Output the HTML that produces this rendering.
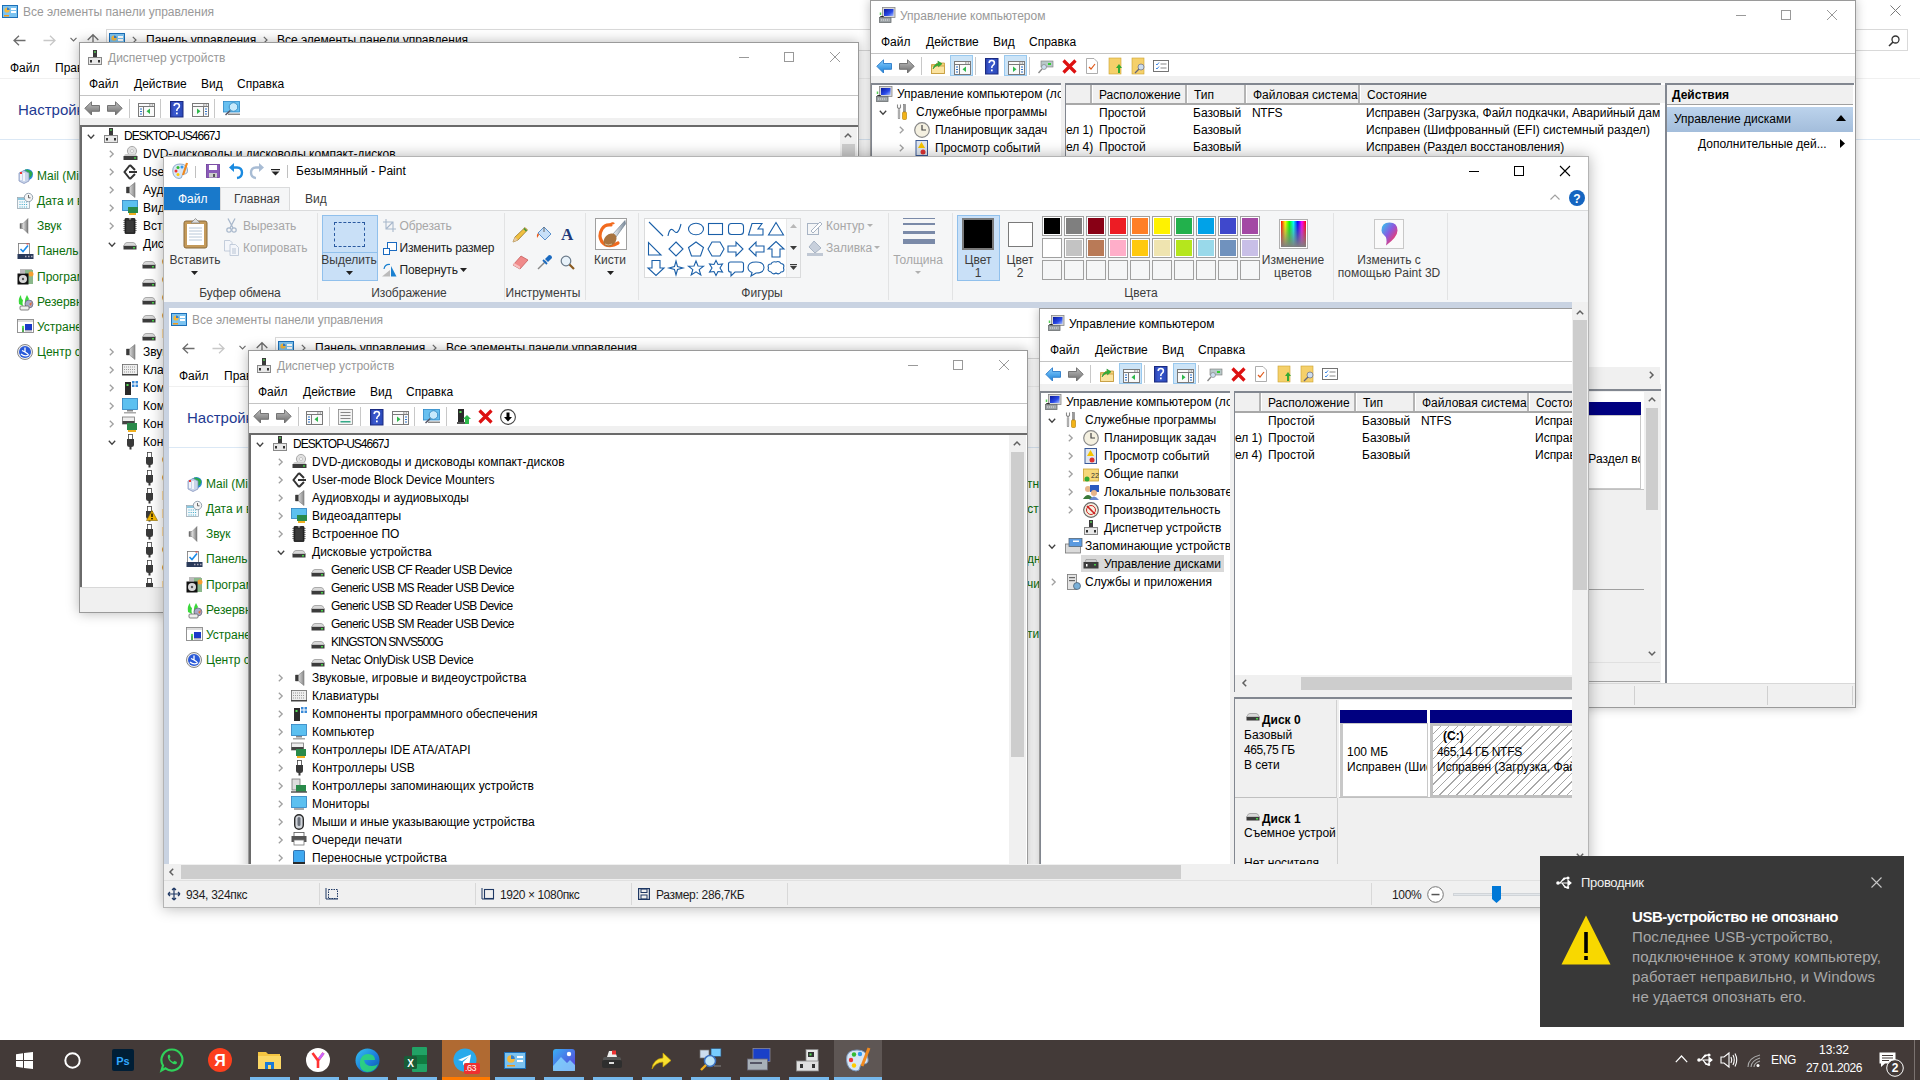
<!DOCTYPE html><html><head><meta charset="utf-8"><style>
*{margin:0;padding:0;box-sizing:border-box}
html,body{width:1920px;height:1080px;overflow:hidden;background:#fff}
body{position:relative;font-family:"Liberation Sans", sans-serif;font-size:12px;color:#000}
.a{position:absolute}
.t{position:absolute;white-space:nowrap;line-height:16px}
svg{overflow:visible}
</style></head><body>
<div class="a" style="left:0px;top:0px;width:1920px;height:1040px;background:#fff;"></div>
<svg class="a" style="left:2px;top:5px;" width="16" height="13" viewBox="0 0 16 13"><rect x="0.5" y="0.5" width="15" height="12" fill="#7cc3f0" stroke="#1c6fb8"/><circle cx="5" cy="5" r="2.6" fill="#f5b73b"/><path d="M5 5 L5 2.4 A2.6 2.6 0 0 1 7.6 5Z" fill="#2f7fd0"/><rect x="9" y="3" width="5" height="2" fill="#fff"/><rect x="9" y="6" width="5" height="2" fill="#fff"/><rect x="2" y="10" width="5" height="1.5" fill="#f09a1a"/></svg>
<div class="t" style="left:23px;top:4.0px;color:#999;">Все элементы панели управления</div>
<svg class="a" style="left:13px;top:35px;" width="13" height="11" viewBox="0 0 13 11"><path d="M6 0.7 L1 5.5 L6 10.3 M1 5.5 H12.5" fill="none" stroke="#6d6d6d" stroke-width="1.3"/></svg>
<svg class="a" style="left:43px;top:35px;" width="13" height="11" viewBox="0 0 13 11"><path d="M7 0.7 L12 5.5 L7 10.3 M12 5.5 H0.5" fill="none" stroke="#c8c8c8" stroke-width="1.3"/></svg>
<svg class="a" style="left:70px;top:37px;" width="7" height="5" viewBox="0 0 7 5"><path d="M0.5 0.8 L3.5 3.8 L6.5 0.8" fill="none" stroke="#6d6d6d" stroke-width="1.2"/></svg>
<svg class="a" style="left:87px;top:34px;" width="12" height="12" viewBox="0 0 12 12"><path d="M0.7 6 L6 0.7 L11.3 6 M6 0.7 V12" fill="none" stroke="#6d6d6d" stroke-width="1.3"/></svg>
<div class="a" style="left:106px;top:29px;width:1743px;height:22px;background:#fff;border:1px solid #d9d9d9;"></div>
<svg class="a" style="left:109px;top:33px;" width="16" height="13" viewBox="0 0 16 13"><rect x="0.5" y="0.5" width="15" height="12" fill="#7cc3f0" stroke="#1c6fb8"/><circle cx="5" cy="5" r="2.6" fill="#f5b73b"/><path d="M5 5 L5 2.4 A2.6 2.6 0 0 1 7.6 5Z" fill="#2f7fd0"/><rect x="9" y="3" width="5" height="2" fill="#fff"/><rect x="9" y="6" width="5" height="2" fill="#fff"/><rect x="2" y="10" width="5" height="1.5" fill="#f09a1a"/></svg>
<svg class="a" style="left:132px;top:36px;" width="5" height="8" viewBox="0 0 5 8"><path d="M0.8 0.8 L4 4 L0.8 7.2" fill="none" stroke="#6d6d6d" stroke-width="1.2"/></svg>
<div class="t" style="left:146px;top:32.0px;">Панель управления</div>
<svg class="a" style="left:263px;top:36px;" width="5" height="8" viewBox="0 0 5 8"><path d="M0.8 0.8 L4 4 L0.8 7.2" fill="none" stroke="#6d6d6d" stroke-width="1.2"/></svg>
<div class="t" style="left:277px;top:32.0px;">Все элементы панели управления</div>
<div class="a" style="left:1855px;top:29px;width:53px;height:22px;background:#fff;border:1px solid #d9d9d9;"></div>
<svg class="a" style="left:1888px;top:35px;" width="12" height="12" viewBox="0 0 12 12"><circle cx="7.5" cy="4.5" r="3.5" fill="none" stroke="#333" stroke-width="1.3"/><path d="M5 7 L1 11" stroke="#333" stroke-width="1.6"/></svg>
<svg class="a" style="left:1890px;top:5px;" width="11" height="11" viewBox="0 0 11 11"><path d="M0.5 0.5 L10.5 10.5 M10.5 0.5 L0.5 10.5" stroke="#7a7a7a" stroke-width="1"/></svg>
<div class="t" style="left:10px;top:60.0px;">Файл</div>
<div class="t" style="left:55px;top:60.0px;">Правка</div>
<div class="t" style="left:110px;top:60.0px;">Вид</div>
<div class="t" style="left:150px;top:60.0px;">Сервис</div>
<div class="a" style="left:0px;top:78px;width:1920px;height:1px;background:#f0f0f0;"></div>
<div class="t" style="left:18px;top:100.0px;font-size:15px;line-height:20px;color:#1e3a92;">Настройка параметров компьютера</div>
<div class="a" style="left:0px;top:139px;width:1920px;height:1px;background:#dbe8f5;"></div>
<svg class="a" style="left:17px;top:168px;" width="17" height="16" viewBox="0 0 17 16"><circle cx="10.5" cy="6.5" r="5.5" fill="#2a8ad8"/><path d="M8 1.5 Q13 1 15.5 5 Q15 9 12 10Z" fill="#2aa84a"/><path d="M2 5 L7 2.5 L12 5 V13 L7 15.5 L2 13Z" fill="#c8d4ea" stroke="#7a8ab8" stroke-width="0.7"/><path d="M4 6 V12 M7 5 V13" stroke="#fff" stroke-width="1.5"/><rect x="3" y="4" width="2" height="2" fill="#e33"/></svg>
<div class="t" style="left:37px;top:168.0px;color:#0b700b;">Mail (Microsoft Outlook)</div>
<svg class="a" style="left:17px;top:193px;" width="17" height="16" viewBox="0 0 17 16"><rect x="0.5" y="4.5" width="12" height="11" fill="#f4f8fb" stroke="#9aa8b4" stroke-width="0.8"/><rect x="1" y="5" width="11" height="2" fill="#8ac8e0"/><path d="M2.5 9 H11 M2.5 11.5 H11 M2.5 14 H11" stroke="#3aa8c8" stroke-width="1" stroke-dasharray="1 1.2"/><circle cx="11.5" cy="4.5" r="4.2" fill="#f4f4f4" stroke="#8a9aa8" stroke-width="0.9"/><path d="M11.5 2 V4.8 H13.5" fill="none" stroke="#444" stroke-width="0.8"/></svg>
<div class="t" style="left:37px;top:193.0px;color:#0b700b;">Дата и время</div>
<svg class="a" style="left:17px;top:218px;" width="17" height="16" viewBox="0 0 17 16"><defs><linearGradient id="cpsp" x1="0" x2="1"><stop offset="0" stop-color="#555"/><stop offset="0.4" stop-color="#ddd"/><stop offset="1" stop-color="#777"/></linearGradient></defs><path d="M3 5.5 H6 L11 0.5 V15.5 L6 10.5 H3Z" fill="url(#cpsp)" stroke="#777" stroke-width="0.5"/></svg>
<div class="t" style="left:37px;top:218.0px;color:#0b700b;">Звук</div>
<svg class="a" style="left:17px;top:243px;" width="17" height="16" viewBox="0 0 17 16"><rect x="1.5" y="0.5" width="11" height="11" fill="#fff" stroke="#777" stroke-width="0.8"/><path d="M3.5 6 L6 8.5 L11 2.5" fill="none" stroke="#1a8ae8" stroke-width="1.6"/><rect x="9.5" y="0.5" width="2" height="1" fill="#e33"/><rect x="0.5" y="11" width="16" height="5" fill="#2a3a5a"/><path d="M8 13.5 H9.5 M11 13.5 H12.5 M14 13.5 H15.5" stroke="#aab" stroke-width="1.4"/></svg>
<div class="t" style="left:37px;top:243.0px;color:#0b700b;">Панель управления NVIDIA</div>
<svg class="a" style="left:17px;top:269px;" width="17" height="16" viewBox="0 0 17 16"><rect x="3" y="0" width="12" height="4" fill="#bbb"/><rect x="8" y="1" width="8" height="14" fill="#8ab88a"/><circle cx="14" cy="5" r="2.5" fill="#f5a030"/><rect x="0.5" y="4.5" width="11" height="11" fill="#111"/><circle cx="6" cy="10" r="4" fill="#d8d8d8"/><circle cx="6" cy="10" r="1.2" fill="#555"/></svg>
<div class="t" style="left:37px;top:269.0px;color:#0b700b;">Программы и компоненты</div>
<svg class="a" style="left:17px;top:294px;" width="17" height="16" viewBox="0 0 17 16"><path d="M2 10 Q1 4 4 1 Q4 5 6 6 Q5 9 6 12Z" fill="#3ad83a"/><path d="M8 12 Q7 6 10 1 L12 5 Q10 7 11 11Z" fill="#3ad83a"/><circle cx="12" cy="10" r="4" fill="#a8a8c8" stroke="#556" stroke-width="0.6"/><path d="M12 10 L15 8 L14 12Z" fill="#e07040"/><rect x="3" y="12" width="9" height="4" rx="1" fill="#eee" stroke="#666" stroke-width="0.8"/></svg>
<div class="t" style="left:37px;top:294.0px;color:#0b700b;">Резервное копирование и восстановление</div>
<svg class="a" style="left:17px;top:319px;" width="17" height="16" viewBox="0 0 17 16"><rect x="0.5" y="0.5" width="16" height="13" fill="#fff" stroke="#888" stroke-width="0.9"/><rect x="1" y="1" width="15" height="2" fill="#ddd"/><rect x="8" y="5" width="7" height="6" fill="#1a3ac8"/><rect x="8" y="11" width="7" height="1.5" fill="#aab"/><rect x="5" y="8" width="2" height="5" fill="#5a5"/><circle cx="6" cy="8" r="1.2" fill="#5d5"/></svg>
<div class="t" style="left:37px;top:319.0px;color:#0b700b;">Устранение неполадок</div>
<svg class="a" style="left:17px;top:344px;" width="17" height="16" viewBox="0 0 17 16"><circle cx="8" cy="8" r="7.5" fill="#eee" stroke="#888" stroke-width="1"/><circle cx="8" cy="8" r="6" fill="#2a5ad8"/><path d="M8 3.5 V8 L5 6.5 M8 8 L11 10 M4 10 Q8 13.5 12 10.5" fill="none" stroke="#fff" stroke-width="1.3"/></svg>
<div class="t" style="left:37px;top:344.0px;color:#0b700b;">Центр синхронизации</div>
<div class="t" style="left:851.5px;top:168.0px;color:#0b700b;">отн</div>
<div class="t" style="left:851.5px;top:193.0px;color:#0b700b;">ост</div>
<div class="t" style="left:851.5px;top:243.0px;color:#0b700b;">одн</div>
<div class="t" style="left:851.5px;top:268.0px;color:#0b700b;">ачи</div>
<div class="t" style="left:851.5px;top:318.0px;color:#0b700b;">оти</div>
<div class="a" style="left:870px;top:0px;width:986px;height:708px;background:#fff;border:1px solid #9a9a9a;box-shadow:0 0 10px rgba(0,0,0,0.25);"></div>
<svg class="a" style="left:879px;top:7px;" width="17" height="16" viewBox="0 0 17 16"><defs><linearGradient id="cmg" x1="0" y1="0" x2="1" y2="1"><stop offset="0" stop-color="#0a1a9a"/><stop offset="0.6" stop-color="#2a4ae8"/><stop offset="1" stop-color="#a8c0ff"/></linearGradient></defs><rect x="3.5" y="0.5" width="12.5" height="10" fill="#d8d8d8" stroke="#888" stroke-width="0.8"/><rect x="5" y="2" width="9.5" height="7" fill="url(#cmg)"/><path d="M1.5 8 V5.5" stroke="#5c5" stroke-width="1.5"/><path d="M1 10 Q3 8.5 5 10" fill="none" stroke="#222" stroke-width="1"/><rect x="0.5" y="10.5" width="11.5" height="5" fill="#9aa0a4" stroke="#6a6e70" stroke-width="0.8"/><path d="M2 13 H10.5" stroke="#e8e8e8" stroke-width="1" stroke-dasharray="1.2 0.8"/></svg>
<div class="t" style="left:900px;top:8.0px;color:#999;">Управление компьютером</div>
<div class="a" style="left:1736px;top:15px;width:10px;height:1px;background:#999;"></div>
<div class="a" style="left:1781px;top:10px;width:10px;height:10px;border:1px solid #999;"></div>
<svg class="a" style="left:1827px;top:10px;" width="10" height="10" viewBox="0 0 10 10"><path d="M0 0 L10 10 M10 0 L0 10" stroke="#999" stroke-width="1"/></svg>
<div class="t" style="left:881px;top:34.0px;">Файл</div>
<div class="t" style="left:926px;top:34.0px;">Действие</div>
<div class="t" style="left:993px;top:34.0px;">Вид</div>
<div class="t" style="left:1029px;top:34.0px;">Справка</div>
<div class="a" style="left:871px;top:53px;width:984px;height:1px;background:#c4c4c4;"></div>
<svg class="a" style="left:876px;top:59px;" width="16" height="15" viewBox="0 0 16 15"><defs><linearGradient id="abg" x1="0" y1="0" x2="0" y2="1"><stop offset="0" stop-color="#8ad0ff"/><stop offset="1" stop-color="#1a80d8"/></linearGradient></defs><path d="M0.8 7.3 L7.5 0.8 V4.5 H15.5 V10.3 H7.5 V14 Z" fill="url(#abg)" stroke="#2a7ac8" stroke-width="0.9" stroke-linejoin="round"/></svg>
<svg class="a" style="left:899px;top:59px;" width="16" height="15" viewBox="0 0 16 15"><defs><linearGradient id="afg" x1="0" y1="0" x2="0" y2="1"><stop offset="0" stop-color="#c0c0c0"/><stop offset="1" stop-color="#6a6a6a"/></linearGradient></defs><path d="M15.2 7.3 L8.5 0.8 V4.5 H0.5 V10.3 H8.5 V14 Z" fill="url(#afg)" stroke="#6a6a6a" stroke-width="0.9" stroke-linejoin="round"/></svg>
<div class="a" style="left:921px;top:57px;width:1px;height:18px;background:#c8c8c8;"></div>
<svg class="a" style="left:931px;top:60px;" width="14" height="14" viewBox="0 0 14 14"><path d="M0.5 4.5 H5 L6 3 H13.5 V13.5 H0.5Z" fill="#f6d27a" stroke="#c49a3a" stroke-width="0.8"/><rect x="0.5" y="6" width="13" height="7.5" fill="#fbe3a0" stroke="#c49a3a" stroke-width="0.8"/><path d="M2 9 Q3 4 7.5 3.5 L6.8 1 L11 3.8 L7.5 6.8 L7.6 5 Q4.5 5.5 2 9Z" fill="#2fb53a" stroke="#1a8a2a" stroke-width="0.5"/></svg>
<div class="a" style="left:950px;top:55px;width:23px;height:21px;background:#cce4f7;border:1px solid #99c9ef;"></div>
<svg class="a" style="left:954px;top:61px;" width="17" height="14" viewBox="0 0 17 14"><rect x="0.5" y="0.5" width="16" height="13" fill="#fafafa" stroke="#7a7a7a" stroke-width="1"/><path d="M1 3.5 H16" stroke="#7a7a7a" stroke-width="1"/><rect x="11" y="1.3" width="1.6" height="1.4" fill="#999"/><rect x="13.6" y="1.3" width="1.6" height="1.4" fill="#999"/><path d="M5.5 3.5 V13" stroke="#7a7a7a" stroke-width="1"/><path d="M2 6 H4 M2 8.5 H4 M2 11 H4" stroke="#2a70c8" stroke-width="1"/><path d="M12 5.5 L8.5 8.3 L12 11Z" fill="#2db84a"/></svg>
<div class="a" style="left:975px;top:57px;width:1px;height:18px;background:#c8c8c8;"></div>
<svg class="a" style="left:985px;top:58px;" width="14" height="17" viewBox="0 0 14 17"><defs><linearGradient id="hlpg" x1="0" x2="1"><stop offset="0" stop-color="#2a3ea8"/><stop offset="0.3" stop-color="#3a5ad0"/><stop offset="1" stop-color="#2a48b8"/></linearGradient></defs><rect x="0.5" y="0.5" width="12.5" height="15.5" fill="url(#hlpg)" stroke="#1a2a80" stroke-width="1"/><path d="M4.2 5 Q4.2 2.5 6.8 2.5 Q9.4 2.5 9.4 5 Q9.4 6.6 7.6 7.6 Q6.8 8.1 6.8 10" fill="none" stroke="#fff" stroke-width="1.6"/><rect x="6" y="11.5" width="1.7" height="1.8" fill="#fff"/></svg>
<div class="a" style="left:1004px;top:55px;width:23px;height:21px;background:#cce4f7;border:1px solid #99c9ef;"></div>
<svg class="a" style="left:1008px;top:61px;" width="17" height="14" viewBox="0 0 17 14"><rect x="0.5" y="0.5" width="16" height="13" fill="#fafafa" stroke="#7a7a7a" stroke-width="1"/><path d="M1 3.5 H16" stroke="#7a7a7a" stroke-width="1"/><rect x="11" y="1.3" width="1.6" height="1.4" fill="#999"/><rect x="13.6" y="1.3" width="1.6" height="1.4" fill="#999"/><path d="M11.5 3.5 V13" stroke="#7a7a7a" stroke-width="1"/><path d="M13 6 H15 M13 8.5 H15 M13 11 H15" stroke="#2a70c8" stroke-width="1"/><path d="M5 5.5 L8.5 8.3 L5 11Z" fill="#2db84a"/></svg>
<div class="a" style="left:1029px;top:57px;width:1px;height:18px;background:#c8c8c8;"></div>
<svg class="a" style="left:1038px;top:60px;" width="16" height="14" viewBox="0 0 16 14"><rect x="3" y="1" width="12" height="6" fill="#b8c8c8" stroke="#777" stroke-width="0.6"/><rect x="10" y="3" width="3" height="2" fill="#3c3"/><circle cx="6" cy="7" r="2.5" fill="#cde" stroke="#777" stroke-width="0.6"/><path d="M4 9 L0.5 13" stroke="#888" stroke-width="1.4"/></svg>
<svg class="a" style="left:1062px;top:59px;" width="15" height="15" viewBox="0 0 15 15"><path d="M1.5 1.5 L13.5 13.5 M13.5 1.5 L1.5 13.5" stroke="#d11" stroke-width="3.2"/></svg>
<svg class="a" style="left:1086px;top:58px;" width="12" height="16" viewBox="0 0 12 16"><path d="M0.5 0.5 H8 L11.5 4 V15.5 H0.5Z" fill="#fff" stroke="#999" stroke-width="0.8"/><path d="M3 9 L5 11 L9 6" fill="none" stroke="#e05a1a" stroke-width="1.2"/></svg>
<svg class="a" style="left:1109px;top:58px;" width="13" height="16" viewBox="0 0 13 16"><rect x="0" y="0" width="12" height="16" fill="#f5d06a" stroke="#c9a030" stroke-width="0.6"/><path d="M9 15 V10 H7 L10 6 L13 10 H11 V15Z" fill="#3a3"/></svg>
<svg class="a" style="left:1132px;top:58px;" width="14" height="16" viewBox="0 0 14 16"><rect x="0" y="0" width="12" height="16" fill="#f5d06a" stroke="#c9a030" stroke-width="0.6"/><circle cx="9" cy="9" r="3" fill="#cde" stroke="#778" stroke-width="0.8"/><path d="M7 11 L3 15" stroke="#667" stroke-width="1.2"/></svg>
<svg class="a" style="left:1153px;top:60px;" width="16" height="12" viewBox="0 0 16 12"><rect x="0.5" y="0.5" width="15" height="11" fill="#fff" stroke="#666" stroke-width="0.9"/><path d="M3 4 L4 5 L6 2.5 M3 8 L4 9 L6 6.5" fill="none" stroke="#2a7ae0" stroke-width="0.9"/><rect x="7.5" y="3.5" width="6" height="1" fill="#888"/><rect x="7.5" y="7.5" width="6" height="1" fill="#888"/></svg>
<div class="a" style="left:871px;top:76px;width:984px;height:7px;background:#f0f0f0;"></div>
<div class="a" style="left:871px;top:83px;width:191px;height:608px;background:#fff;border-top:2px solid #828790;border-left:1px solid #828790;"></div>
<div class="a" style="left:1061px;top:83px;width:4px;height:608px;background:#f0f0f0;"></div>
<div class="a" style="left:1065px;top:83px;width:596px;height:308px;background:#fff;border-top:2px solid #828790;border-left:1px solid #828790;"></div>
<div class="a" style="left:872px;top:85px;width:189px;height:605px;overflow:hidden"><div class="a" style="left:-872px;top:-85px;width:1920px;height:1080px">
<svg class="a" style="left:876px;top:86px;" width="17" height="16" viewBox="0 0 17 16"><defs><linearGradient id="cmg" x1="0" y1="0" x2="1" y2="1"><stop offset="0" stop-color="#0a1a9a"/><stop offset="0.6" stop-color="#2a4ae8"/><stop offset="1" stop-color="#a8c0ff"/></linearGradient></defs><rect x="3.5" y="0.5" width="12.5" height="10" fill="#d8d8d8" stroke="#888" stroke-width="0.8"/><rect x="5" y="2" width="9.5" height="7" fill="url(#cmg)"/><path d="M1.5 8 V5.5" stroke="#5c5" stroke-width="1.5"/><path d="M1 10 Q3 8.5 5 10" fill="none" stroke="#222" stroke-width="1"/><rect x="0.5" y="10.5" width="11.5" height="5" fill="#9aa0a4" stroke="#6a6e70" stroke-width="0.8"/><path d="M2 13 H10.5" stroke="#e8e8e8" stroke-width="1" stroke-dasharray="1.2 0.8"/></svg>
<div class="t" style="left:897px;top:86.0px;">Управление компьютером (локальным)</div>
<svg class="a" style="left:879px;top:109.5px;" width="8" height="5" viewBox="0 0 8 5"><path d="M0.8 0.8 L4 4.2 L7.2 0.8" fill="none" stroke="#404040" stroke-width="1.3"/></svg>
<svg class="a" style="left:896px;top:104px;" width="13" height="16" viewBox="0 0 13 16"><path d="M1.5 0.5 V3.5 L3 5 L4.5 3.5 V0.5 M3 5 V15" fill="none" stroke="#8a8a8a" stroke-width="1.1"/><path d="M2.3 5.5 V14.5 H3.7 V5.5" fill="#e8e8e8" stroke="#7a7a7a" stroke-width="0.6"/><rect x="7.6" y="0.5" width="1.8" height="7.5" fill="#9a9a9a" stroke="#666" stroke-width="0.5"/><rect x="6.5" y="8" width="4" height="7.5" rx="1" fill="#f2b318" stroke="#b07a00" stroke-width="0.6"/></svg>
<div class="t" style="left:916px;top:104.0px;">Служебные программы</div>
<svg class="a" style="left:899px;top:126px;" width="5" height="8" viewBox="0 0 5 8"><path d="M0.8 0.8 L4.2 4 L0.8 7.2" fill="none" stroke="#a0a0a0" stroke-width="1.3"/></svg>
<svg class="a" style="left:914px;top:122px;" width="16" height="16" viewBox="0 0 16 16"><circle cx="8" cy="8" r="7.3" fill="#f4f0e0" stroke="#888" stroke-width="1.2"/><path d="M8 3 V8 H12" stroke="#444" stroke-width="1.2" fill="none"/></svg>
<div class="t" style="left:935px;top:122.0px;">Планировщик задач</div>
<svg class="a" style="left:899px;top:144px;" width="5" height="8" viewBox="0 0 5 8"><path d="M0.8 0.8 L4.2 4 L0.8 7.2" fill="none" stroke="#a0a0a0" stroke-width="1.3"/></svg>
<svg class="a" style="left:915px;top:140px;" width="13" height="16" viewBox="0 0 13 16"><rect x="1" y="0.5" width="11.5" height="15" fill="#dfe6f0" stroke="#3a5a9a"/><path d="M6.5 2 L10 8 H3Z" fill="#f5c400"/><circle cx="8" cy="12" r="2.5" fill="#d33"/></svg>
<div class="t" style="left:935px;top:140.0px;">Просмотр событий</div>
<svg class="a" style="left:899px;top:162px;" width="5" height="8" viewBox="0 0 5 8"><path d="M0.8 0.8 L4.2 4 L0.8 7.2" fill="none" stroke="#a0a0a0" stroke-width="1.3"/></svg>
<svg class="a" style="left:914px;top:158px;" width="16" height="16" viewBox="0 0 16 16"><rect x="0.5" y="3" width="15" height="12" fill="#f5d879" stroke="#c9a030" stroke-width="0.8"/><circle cx="4" cy="13" r="2.5" fill="#3a3"/><text x="8" y="12" font-size="7" fill="#333" font-family="Liberation Sans">22</text></svg>
<div class="t" style="left:935px;top:158.0px;">Общие папки</div>
<svg class="a" style="left:899px;top:180px;" width="5" height="8" viewBox="0 0 5 8"><path d="M0.8 0.8 L4.2 4 L0.8 7.2" fill="none" stroke="#a0a0a0" stroke-width="1.3"/></svg>
<svg class="a" style="left:914px;top:176px;" width="16" height="16" viewBox="0 0 16 16"><circle cx="5" cy="5" r="3" fill="#e7b58a"/><path d="M0 15 Q5 7 10 15Z" fill="#3a7a3a"/><rect x="7" y="1" width="9" height="7" fill="#2a5ac0"/><circle cx="11" cy="9" r="3" fill="#e7b58a"/><path d="M6 16 Q11 9 16 16Z" fill="#6a8ad0"/></svg>
<div class="t" style="left:935px;top:176.0px;">Локальные пользователи и группы</div>
<svg class="a" style="left:899px;top:198px;" width="5" height="8" viewBox="0 0 5 8"><path d="M0.8 0.8 L4.2 4 L0.8 7.2" fill="none" stroke="#a0a0a0" stroke-width="1.3"/></svg>
<svg class="a" style="left:914px;top:194px;" width="16" height="16" viewBox="0 0 16 16"><circle cx="8" cy="8" r="7.3" fill="#f4f0e0" stroke="#666" stroke-width="1.2"/><path d="M4 4 L12 12" stroke="#c22" stroke-width="1.6"/><circle cx="8" cy="8" r="4.5" fill="none" stroke="#c22" stroke-width="1"/></svg>
<div class="t" style="left:935px;top:194.0px;">Производительность</div>
<svg class="a" style="left:915px;top:212px;" width="14" height="15" viewBox="0 0 14 15"><rect x="5" y="0" width="4" height="7" fill="#3a3a3a"/><rect x="6.2" y="1.2" width="1.6" height="1.6" fill="#5ee05e"/><rect x="0.5" y="7.5" width="13" height="7" fill="#e8e8e8" stroke="#888"/><rect x="2" y="10" width="2" height="2.5" fill="#333"/><rect x="10" y="10" width="2" height="2.5" fill="#333"/></svg>
<div class="t" style="left:935px;top:212.0px;">Диспетчер устройств</div>
<svg class="a" style="left:879px;top:235.5px;" width="8" height="5" viewBox="0 0 8 5"><path d="M0.8 0.8 L4 4.2 L7.2 0.8" fill="none" stroke="#404040" stroke-width="1.3"/></svg>
<svg class="a" style="left:896px;top:230px;" width="18" height="16" viewBox="0 0 18 16"><rect x="0.5" y="6" width="15" height="9" fill="#dadada" stroke="#777" stroke-width="0.8"/><rect x="4" y="0.5" width="13" height="8" fill="#5a9ae0" stroke="#567" stroke-width="0.8"/><rect x="8" y="2.5" width="6" height="1.5" fill="#fff"/></svg>
<div class="t" style="left:916px;top:230.0px;">Запоминающие устройства</div>
<div class="a" style="left:912px;top:247px;width:143px;height:17px;background:#d9d9d9;"></div>
<svg class="a" style="left:914px;top:251px;" width="16" height="10" viewBox="0 0 16 10"><rect x="0.5" y="3" width="15" height="6.5" fill="#3c3c3c"/><path d="M2 3 L3 0.5 H13 L14 3" fill="#ccc" stroke="#888" stroke-width="0.6"/><rect x="3" y="5" width="1.5" height="2.5" fill="#fff"/><rect x="11" y="5" width="2" height="1.5" fill="#4c4"/></svg>
<div class="t" style="left:935px;top:248.0px;">Управление дисками</div>
<svg class="a" style="left:882px;top:270px;" width="5" height="8" viewBox="0 0 5 8"><path d="M0.8 0.8 L4.2 4 L0.8 7.2" fill="none" stroke="#a0a0a0" stroke-width="1.3"/></svg>
<svg class="a" style="left:898px;top:266px;" width="14" height="16" viewBox="0 0 14 16"><rect x="0.5" y="0.5" width="9" height="15" fill="#e4e4e4" stroke="#777" stroke-width="0.8"/><rect x="2" y="3" width="6" height="1.2" fill="#666"/><rect x="2" y="6" width="6" height="1.2" fill="#666"/><circle cx="10" cy="12" r="3.5" fill="#7ab0d8" stroke="#456" stroke-width="0.7"/></svg>
<div class="t" style="left:916px;top:266.0px;">Службы и приложения</div>
</div></div>
<div class="a" style="left:1066px;top:85px;width:594px;height:20px;background:#f0f0f0;border-bottom:2px solid #a8a8a8;"></div>
<div class="a" style="left:1066px;top:85px;width:26px;height:18px;background:#f0f0f0;border-right:2px solid #b4b4b4;"></div>
<div class="a" style="left:1092px;top:85px;width:95px;height:18px;background:#f0f0f0;border-left:1px solid #fff;border-right:2px solid #b4b4b4;"></div>
<div class="t" style="left:1099px;top:86.5px;">Расположение</div>
<div class="a" style="left:1187px;top:85px;width:59px;height:18px;background:#f0f0f0;border-left:1px solid #fff;border-right:2px solid #b4b4b4;"></div>
<div class="t" style="left:1194px;top:86.5px;">Тип</div>
<div class="a" style="left:1246px;top:85px;width:114px;height:18px;background:#f0f0f0;border-left:1px solid #fff;border-right:2px solid #b4b4b4;"></div>
<div class="t" style="left:1253px;top:86.5px;">Файловая система</div>
<div class="a" style="left:1360px;top:85px;width:400px;height:18px;background:#f0f0f0;border-left:1px solid #fff;border-right:2px solid #b4b4b4;"></div>
<div class="t" style="left:1367px;top:86.5px;">Состояние</div>
<div class="a" style="left:1066px;top:104px;width:594px;height:60px;overflow:hidden">
<div class="t" style="left:0px;top:1.0px;"></div>
<div class="t" style="left:33px;top:1.0px;">Простой</div>
<div class="t" style="left:127px;top:1.0px;">Базовый</div>
<div class="t" style="left:186px;top:1.0px;letter-spacing:-0.3px;">NTFS</div>
<div class="t" style="left:300px;top:1.0px;">Исправен (Загрузка, Файл подкачки, Аварийный дамп памяти, Основной раздел)</div>
<div class="t" style="left:0px;top:18.0px;">ел 1)</div>
<div class="t" style="left:33px;top:18.0px;">Простой</div>
<div class="t" style="left:127px;top:18.0px;">Базовый</div>
<div class="t" style="left:186px;top:18.0px;letter-spacing:-0.3px;"></div>
<div class="t" style="left:300px;top:18.0px;">Исправен (Шифрованный (EFI) системный раздел)</div>
<div class="t" style="left:0px;top:35.0px;">ел 4)</div>
<div class="t" style="left:33px;top:35.0px;">Простой</div>
<div class="t" style="left:127px;top:35.0px;">Базовый</div>
<div class="t" style="left:186px;top:35.0px;letter-spacing:-0.3px;"></div>
<div class="t" style="left:300px;top:35.0px;">Исправен (Раздел восстановления)</div>
</div>
<div class="a" style="left:1066px;top:367px;width:594px;height:17px;background:#f0f0f0;"></div>
<div class="a" style="left:1132px;top:369px;width:430px;height:13px;background:#cdcdcd;"></div>
<svg class="a" style="left:1073px;top:371px;" width="5" height="8" viewBox="0 0 5 8"><path d="M4.2 0.8 L1 4 L4.2 7.2" fill="none" stroke="#606060" stroke-width="1.5"/></svg>
<svg class="a" style="left:1649px;top:371px;" width="5" height="8" viewBox="0 0 5 8"><path d="M0.8 0.8 L4 4 L0.8 7.2" fill="none" stroke="#606060" stroke-width="1.5"/></svg>
<div class="a" style="left:1065px;top:384px;width:596px;height:6px;background:#f0f0f0;border-bottom:1px solid #e8e8e8;"></div>
<div class="a" style="left:1065px;top:389px;width:596px;height:302px;background:#f0f0f0;border-top:2px solid #828790;border-left:1px solid #828790;"></div>
<div class="a" style="left:1066px;top:391px;width:578px;height:271px;overflow:hidden"><div class="a" style="left:-1066px;top:-391px;width:1920px;height:1080px">
<div class="a" style="left:1066px;top:392px;width:102px;height:98px;background:#f0f0f0;border-right:1px solid #d0d0d0;border-bottom:1px solid #c0c0c0;"></div>
<svg class="a" style="left:1077px;top:405px;" width="14" height="8" viewBox="0 0 14 8"><path d="M1.5 2.5 Q2 0.5 4 0.5 H10 Q12 0.5 12.5 2.5 L13.5 4 H0.5Z" fill="#d8d8d8" stroke="#9a9a9a" stroke-width="0.8"/><rect x="0.5" y="4" width="13" height="3.5" fill="#3c3c3c"/><rect x="10" y="5" width="2" height="1.5" fill="#46d046"/></svg>
<div class="t" style="left:1093px;top:404.0px;font-weight:bold;">Диск 0</div>
<div class="t" style="left:1075px;top:419.0px;">Базовый</div>
<div class="t" style="left:1075px;top:434.0px;letter-spacing:-0.4px;">465,75 ГБ</div>
<div class="t" style="left:1075px;top:449.0px;">В сети</div>
<div class="a" style="left:1170px;top:392px;width:474px;height:98px;background:#fff;border-bottom:1px solid #c0c0c0;"></div>
<div class="a" style="left:1171px;top:402px;width:87px;height:13px;background:#000080;"></div>
<div class="a" style="left:1261px;top:402px;width:262px;height:13px;background:#000080;"></div>
<div class="a" style="left:1526px;top:402px;width:115px;height:13px;background:#000080;"></div>
<div class="a" style="left:1171px;top:415px;width:88px;height:74px;background:#fff;border:1px solid #c8c8c8;border-left:3px solid #c8c8c8;"></div>
<div class="a" style="left:1174px;top:416px;width:84px;height:72px;overflow:hidden"><div class="a" style="left:-1174px;top:-416px;width:1920px;height:1080px">
<div class="t" style="left:1178px;top:436.0px;">100 МБ</div>
<div class="t" style="left:1178px;top:451.0px;">Исправен (Шифрованный</div>
</div></div>
<div class="a" style="left:1526px;top:415px;width:115px;height:74px;background:#fff;border:1px solid #c8c8c8;"></div>
<div class="a" style="left:1527px;top:416px;width:113px;height:72px;overflow:hidden"><div class="a" style="left:-1527px;top:-416px;width:1920px;height:1080px">
<div class="t" style="left:1527px;top:451.0px;">Исправен (Раздел восстановления)</div>
</div></div>
<div class="a" style="left:1261px;top:415px;width:262px;height:75px;border:3px solid #c0c0c0;background:repeating-linear-gradient(135deg,#fff 0,#fff 5px,#a8a8a8 5px,#a8a8a8 6px)"></div>
<div class="a" style="left:1264px;top:418px;width:256px;height:69px;overflow:hidden"><div class="a" style="left:-1264px;top:-418px;width:1920px;height:1080px">
<div class="t" style="left:1274px;top:420.0px;font-weight:bold;">(C:)</div>
<div class="t" style="left:1268px;top:436.0px;letter-spacing:-0.3px;">465,14 ГБ NTFS</div>
<div class="t" style="left:1268px;top:451.0px;">Исправен (Загрузка, Файл подкачки, Аварийный дамп памяти, Основной раздел)</div>
</div></div>
<div class="a" style="left:1066px;top:490px;width:578px;height:100px;background:#f0f0f0;border-bottom:1px solid #a0a0a0;"></div>
<div class="a" style="left:1168px;top:490px;width:1px;height:100px;background:#d0d0d0;"></div>
<svg class="a" style="left:1077px;top:505px;" width="14" height="8" viewBox="0 0 14 8"><path d="M1.5 2.5 Q2 0.5 4 0.5 H10 Q12 0.5 12.5 2.5 L13.5 4 H0.5Z" fill="#d8d8d8" stroke="#9a9a9a" stroke-width="0.8"/><rect x="0.5" y="4" width="13" height="3.5" fill="#3c3c3c"/><rect x="10" y="5" width="2" height="1.5" fill="#46d046"/></svg>
<div class="t" style="left:1093px;top:503.0px;font-weight:bold;">Диск 1</div>
<div class="a" style="left:1066px;top:491px;width:101px;height:99px;overflow:hidden"><div class="a" style="left:-1066px;top:-491px;width:1920px;height:1080px">
<div class="t" style="left:1075px;top:517.0px;">Съемное устройство</div>
<div class="t" style="left:1075px;top:547.0px;">Нет носителя</div>
</div></div>
<div class="a" style="left:1066px;top:592px;width:578px;height:70px;background:#f0f0f0;"></div>
<div class="a" style="left:1168px;top:592px;width:1px;height:70px;background:#d0d0d0;"></div>
</div></div>
<div class="a" style="left:1644px;top:392px;width:16px;height:270px;background:#f0f0f0;"></div>
<div class="a" style="left:1646px;top:408px;width:12px;height:102px;background:#cdcdcd;"></div>
<svg class="a" style="left:1648px;top:397px;" width="8" height="5" viewBox="0 0 8 5"><path d="M0.8 4.2 L4 1 L7.2 4.2" fill="none" stroke="#606060" stroke-width="1.5"/></svg>
<svg class="a" style="left:1648px;top:651px;" width="8" height="5" viewBox="0 0 8 5"><path d="M0.8 0.8 L4 4 L7.2 0.8" fill="none" stroke="#606060" stroke-width="1.5"/></svg>
<div class="a" style="left:1066px;top:662px;width:594px;height:20px;background:#f0f0f0;border-top:1px solid #e0e0e0;border-bottom:1px solid #a0a0a0;"></div>
<div class="a" style="left:1665px;top:83px;width:189px;height:600px;background:#fff;border-top:2px solid #828790;border-left:2px solid #828790;"></div>
<div class="a" style="left:1667px;top:85px;width:186px;height:20px;background:#f0f0f0;border-bottom:1px solid #a0a0a0;"></div>
<div class="t" style="left:1672px;top:87.0px;font-weight:bold;">Действия</div>
<div class="a" style="left:1667px;top:107px;width:186px;height:25px;background:linear-gradient(#bcd3ec,#a3bddb);"></div>
<div class="t" style="left:1674px;top:111.0px;">Управление дисками</div>
<svg class="a" style="left:1836px;top:115px;" width="10" height="6" viewBox="0 0 10 6"><path d="M0 6 L5 0 L10 6Z" fill="#000"/></svg>
<div class="t" style="left:1698px;top:135.5px;">Дополнительные дей...</div>
<svg class="a" style="left:1840px;top:139px;" width="5" height="9" viewBox="0 0 5 9"><path d="M0 0 L5 4.5 L0 9Z" fill="#000"/></svg>
<div class="a" style="left:871px;top:683px;width:984px;height:24px;background:#f0f0f0;border-top:1px solid #d8d8d8;"></div>
<div class="a" style="left:1634px;top:686px;width:1px;height:19px;background:#d0d0d0;"></div>
<div class="a" style="left:1767px;top:686px;width:1px;height:19px;background:#d0d0d0;"></div>
<div class="a" style="left:1852px;top:686px;width:1px;height:19px;background:#d0d0d0;"></div>
<div class="a" style="left:79px;top:42px;width:780px;height:571px;background:#fff;border:1px solid #9a9a9a;box-shadow:0 0 12px rgba(0,0,0,0.28);"></div>
<svg class="a" style="left:88px;top:50px;" width="14" height="15" viewBox="0 0 14 15"><rect x="5" y="0" width="4" height="7" fill="#3a3a3a"/><rect x="6.2" y="1.2" width="1.6" height="1.6" fill="#5ee05e"/><rect x="0.5" y="7.5" width="13" height="7" fill="#e8e8e8" stroke="#888"/><rect x="2" y="10" width="2" height="2.5" fill="#333"/><rect x="10" y="10" width="2" height="2.5" fill="#333"/></svg>
<div class="t" style="left:108px;top:50.0px;color:#999;">Диспетчер устройств</div>
<div class="a" style="left:739px;top:57px;width:10px;height:1px;background:#999;"></div>
<div class="a" style="left:784px;top:52px;width:10px;height:10px;border:1px solid #999;"></div>
<svg class="a" style="left:830px;top:52px;" width="10" height="10" viewBox="0 0 10 10"><path d="M0 0 L10 10 M10 0 L0 10" stroke="#999" stroke-width="1"/></svg>
<div class="t" style="left:89px;top:76.0px;">Файл</div>
<div class="t" style="left:134px;top:76.0px;">Действие</div>
<div class="t" style="left:201px;top:76.0px;">Вид</div>
<div class="t" style="left:237px;top:76.0px;">Справка</div>
<div class="a" style="left:80px;top:95px;width:778px;height:1px;background:#c4c4c4;"></div>
<svg class="a" style="left:84px;top:101px;" width="16" height="15" viewBox="0 0 16 15"><path d="M0.8 7.3 L7.5 0.8 V4.5 H15.5 V10.3 H7.5 V14 Z" fill="url(#afg)" stroke="#6a6a6a" stroke-width="0.9" stroke-linejoin="round"/><defs><linearGradient id="afg" x1="0" y1="0" x2="0" y2="1"><stop offset="0" stop-color="#c0c0c0"/><stop offset="1" stop-color="#6a6a6a"/></linearGradient></defs></svg>
<svg class="a" style="left:107px;top:101px;" width="16" height="15" viewBox="0 0 16 15"><defs><linearGradient id="afg" x1="0" y1="0" x2="0" y2="1"><stop offset="0" stop-color="#c0c0c0"/><stop offset="1" stop-color="#6a6a6a"/></linearGradient></defs><path d="M15.2 7.3 L8.5 0.8 V4.5 H0.5 V10.3 H8.5 V14 Z" fill="url(#afg)" stroke="#6a6a6a" stroke-width="0.9" stroke-linejoin="round"/></svg>
<div class="a" style="left:129px;top:99px;width:1px;height:19px;background:#c8c8c8;"></div>
<svg class="a" style="left:138px;top:103px;" width="17" height="14" viewBox="0 0 17 14"><rect x="0.5" y="0.5" width="16" height="13" fill="#fafafa" stroke="#7a7a7a" stroke-width="1"/><path d="M1 3.5 H16" stroke="#7a7a7a" stroke-width="1"/><rect x="11" y="1.3" width="1.6" height="1.4" fill="#999"/><rect x="13.6" y="1.3" width="1.6" height="1.4" fill="#999"/><path d="M5.5 3.5 V13" stroke="#7a7a7a" stroke-width="1"/><path d="M2 6 H4 M2 8.5 H4 M2 11 H4" stroke="#2a70c8" stroke-width="1"/><path d="M12 5.5 L8.5 8.3 L12 11Z" fill="#2db84a"/></svg>
<div class="a" style="left:160px;top:99px;width:1px;height:19px;background:#c8c8c8;"></div>
<svg class="a" style="left:170px;top:101px;" width="13" height="16" viewBox="0 0 13 16"><defs><linearGradient id="hlpg" x1="0" x2="1"><stop offset="0" stop-color="#2a3ea8"/><stop offset="0.3" stop-color="#3a5ad0"/><stop offset="1" stop-color="#2a48b8"/></linearGradient></defs><rect x="0.5" y="0.5" width="12.5" height="15.5" fill="url(#hlpg)" stroke="#1a2a80" stroke-width="1"/><path d="M4.2 5 Q4.2 2.5 6.8 2.5 Q9.4 2.5 9.4 5 Q9.4 6.6 7.6 7.6 Q6.8 8.1 6.8 10" fill="none" stroke="#fff" stroke-width="1.6"/><rect x="6" y="11.5" width="1.7" height="1.8" fill="#fff"/></svg>
<svg class="a" style="left:192px;top:103px;" width="17" height="14" viewBox="0 0 17 14"><rect x="0.5" y="0.5" width="16" height="13" fill="#fafafa" stroke="#7a7a7a" stroke-width="1"/><path d="M1 3.5 H16" stroke="#7a7a7a" stroke-width="1"/><rect x="11" y="1.3" width="1.6" height="1.4" fill="#999"/><rect x="13.6" y="1.3" width="1.6" height="1.4" fill="#999"/><path d="M11.5 3.5 V13" stroke="#7a7a7a" stroke-width="1"/><path d="M13 6 H15 M13 8.5 H15 M13 11 H15" stroke="#2a70c8" stroke-width="1"/><path d="M5 5.5 L8.5 8.3 L5 11Z" fill="#2db84a"/></svg>
<div class="a" style="left:214px;top:99px;width:1px;height:19px;background:#c8c8c8;"></div>
<svg class="a" style="left:223px;top:101px;" width="17" height="15" viewBox="0 0 17 15"><rect x="0.5" y="0.5" width="16" height="10.5" fill="#68c0f0" stroke="#2a88c8" stroke-width="0.8"/><circle cx="10.5" cy="6" r="4.3" fill="#c8eafc" stroke="#3a90c8" stroke-width="1"/><path d="M7.3 9.5 L2.5 14" stroke="#556" stroke-width="1.5"/><rect x="5" y="12.5" width="12" height="1.5" fill="#8a8a8a"/></svg>
<div class="a" style="left:80px;top:118px;width:778px;height:7px;background:#f0f0f0;"></div>
<div class="a" style="left:80px;top:125px;width:778px;height:462px;background:#fff;border-top:2px solid #6a6a6a;border-left:2px solid #6a6a6a;"></div>
<div class="a" style="left:82px;top:127px;width:758px;height:460px;overflow:hidden"><div class="a" style="left:-82px;top:-127px;width:1920px;height:1080px">
<svg class="a" style="left:87px;top:133.5px;" width="8" height="5" viewBox="0 0 8 5"><path d="M0.8 0.8 L4 4.2 L7.2 0.8" fill="none" stroke="#404040" stroke-width="1.3"/></svg>
<svg class="a" style="left:104px;top:128px;" width="14" height="15" viewBox="0 0 14 15"><rect x="5" y="0" width="4" height="7" fill="#3a3a3a"/><rect x="6.2" y="1.2" width="1.6" height="1.6" fill="#5ee05e"/><rect x="0.5" y="7.5" width="13" height="7" fill="#e8e8e8" stroke="#888"/><rect x="2" y="10" width="2" height="2.5" fill="#333"/><rect x="10" y="10" width="2" height="2.5" fill="#333"/></svg>
<div class="t" style="left:124px;top:128.0px;letter-spacing:-1.0px;">DESKTOP-US4667J</div>
<svg class="a" style="left:109px;top:150px;" width="5" height="8" viewBox="0 0 5 8"><path d="M0.8 0.8 L4.2 4 L0.8 7.2" fill="none" stroke="#a0a0a0" stroke-width="1.3"/></svg>
<svg class="a" style="left:123px;top:146px;" width="15" height="15" viewBox="0 0 15 15"><circle cx="9" cy="5" r="4.6" fill="#e0e0e0" stroke="#999" stroke-width="0.8"/><circle cx="9" cy="5" r="1.5" fill="#fff" stroke="#aaa" stroke-width="0.6"/><path d="M1 10 Q1.5 8 3 8 H12 Q13.5 8 14 10Z" fill="#ccc"/><rect x="0.5" y="10" width="14" height="4" fill="#3c3c3c"/><rect x="11" y="11.2" width="2" height="1.5" fill="#4c4"/></svg>
<div class="t" style="left:143px;top:146.0px;">DVD-дисководы и дисководы компакт-дисков</div>
<svg class="a" style="left:109px;top:168px;" width="5" height="8" viewBox="0 0 5 8"><path d="M0.8 0.8 L4.2 4 L0.8 7.2" fill="none" stroke="#a0a0a0" stroke-width="1.3"/></svg>
<svg class="a" style="left:123px;top:164px;" width="15" height="16" viewBox="0 0 15 16"><path d="M7 1 L1.5 8 L7 15 M7 1 L12 6 M7 15 L12 10" fill="none" stroke="#333" stroke-width="2"/><path d="M6 8 H14" stroke="#333" stroke-width="2"/></svg>
<div class="t" style="left:143px;top:164.0px;letter-spacing:-0.1px;">User-mode Block Device Mounters</div>
<svg class="a" style="left:109px;top:186px;" width="5" height="8" viewBox="0 0 5 8"><path d="M0.8 0.8 L4.2 4 L0.8 7.2" fill="none" stroke="#a0a0a0" stroke-width="1.3"/></svg>
<svg class="a" style="left:126px;top:182px;" width="10" height="16" viewBox="0 0 10 16"><defs><linearGradient id="spg" x1="0" x2="1"><stop offset="0" stop-color="#4a4a4a"/><stop offset="0.35" stop-color="#d8d8d8"/><stop offset="1" stop-color="#8a8a8a"/></linearGradient></defs><path d="M0.5 5 H3.5 L9 0.5 V15.5 L3.5 11 H0.5Z" fill="url(#spg)" stroke="#7a7a7a" stroke-width="0.6"/><rect x="0.5" y="5" width="3" height="6" fill="#3a3a3a"/></svg>
<div class="t" style="left:143px;top:182.0px;">Аудиовходы и аудиовыходы</div>
<svg class="a" style="left:109px;top:204px;" width="5" height="8" viewBox="0 0 5 8"><path d="M0.8 0.8 L4.2 4 L0.8 7.2" fill="none" stroke="#a0a0a0" stroke-width="1.3"/></svg>
<svg class="a" style="left:122px;top:200px;" width="16" height="16" viewBox="0 0 16 16"><rect x="0.5" y="0.5" width="15" height="10" fill="#5cc0f0" stroke="#2a80c0" stroke-width="0.8"/><rect x="6" y="7" width="10" height="6" fill="#2a8a4a"/><rect x="7" y="13" width="7" height="2" fill="#f0b020"/></svg>
<div class="t" style="left:143px;top:200.0px;">Видеоадаптеры</div>
<svg class="a" style="left:109px;top:222px;" width="5" height="8" viewBox="0 0 5 8"><path d="M0.8 0.8 L4.2 4 L0.8 7.2" fill="none" stroke="#a0a0a0" stroke-width="1.3"/></svg>
<svg class="a" style="left:123px;top:218px;" width="14" height="16" viewBox="0 0 14 16"><rect x="2" y="0.5" width="10" height="15" rx="0.5" fill="#2e2e2e" stroke="#111" stroke-width="0.8"/><path d="M0.5 2.5 H2 M0.5 4.5 H2 M0.5 6.5 H2 M0.5 8.5 H2 M0.5 10.5 H2 M0.5 12.5 H2 M12 2.5 H13.5 M12 4.5 H13.5 M12 6.5 H13.5 M12 8.5 H13.5 M12 10.5 H13.5 M12 12.5 H13.5" stroke="#222" stroke-width="1"/><path d="M0.5 2.5 H1.5 M0.5 4.5 H1.5 M0.5 6.5 H1.5 M0.5 8.5 H1.5 M0.5 10.5 H1.5 M0.5 12.5 H1.5 M12.5 2.5 H13.5 M12.5 4.5 H13.5 M12.5 6.5 H13.5 M12.5 8.5 H13.5 M12.5 10.5 H13.5 M12.5 12.5 H13.5" stroke="#fff" stroke-width="0.5"/><path d="M5.5 0.5 Q7 2.5 8.5 0.5" fill="#fff"/><rect x="3.5" y="3" width="7" height="11" fill="#3a3a3a"/></svg>
<div class="t" style="left:143px;top:218.0px;">Встроенное ПО</div>
<svg class="a" style="left:108px;top:241.5px;" width="8" height="5" viewBox="0 0 8 5"><path d="M0.8 0.8 L4 4.2 L7.2 0.8" fill="none" stroke="#404040" stroke-width="1.3"/></svg>
<svg class="a" style="left:123px;top:242px;" width="14" height="8" viewBox="0 0 14 8"><path d="M1.5 2.5 Q2 0.5 4 0.5 H10 Q12 0.5 12.5 2.5 L13.5 4 H0.5Z" fill="#d8d8d8" stroke="#9a9a9a" stroke-width="0.8"/><rect x="0.5" y="4" width="13" height="3.5" fill="#3c3c3c"/><rect x="10" y="5" width="2" height="1.5" fill="#46d046"/></svg>
<div class="t" style="left:143px;top:236.0px;">Дисковые устройства</div>
<svg class="a" style="left:142px;top:261px;" width="14" height="8" viewBox="0 0 14 8"><path d="M1.5 2.5 Q2 0.5 4 0.5 H10 Q12 0.5 12.5 2.5 L13.5 4 H0.5Z" fill="#d8d8d8" stroke="#9a9a9a" stroke-width="0.8"/><rect x="0.5" y="4" width="13" height="3.5" fill="#3c3c3c"/><rect x="10" y="5" width="2" height="1.5" fill="#46d046"/></svg>
<div class="t" style="left:162px;top:254.0px;letter-spacing:-0.6px;">Generic USB CF Reader USB Device</div>
<svg class="a" style="left:142px;top:279px;" width="14" height="8" viewBox="0 0 14 8"><path d="M1.5 2.5 Q2 0.5 4 0.5 H10 Q12 0.5 12.5 2.5 L13.5 4 H0.5Z" fill="#d8d8d8" stroke="#9a9a9a" stroke-width="0.8"/><rect x="0.5" y="4" width="13" height="3.5" fill="#3c3c3c"/><rect x="10" y="5" width="2" height="1.5" fill="#46d046"/></svg>
<div class="t" style="left:162px;top:272.0px;letter-spacing:-0.6px;">Generic USB MS Reader USB Device</div>
<svg class="a" style="left:142px;top:297px;" width="14" height="8" viewBox="0 0 14 8"><path d="M1.5 2.5 Q2 0.5 4 0.5 H10 Q12 0.5 12.5 2.5 L13.5 4 H0.5Z" fill="#d8d8d8" stroke="#9a9a9a" stroke-width="0.8"/><rect x="0.5" y="4" width="13" height="3.5" fill="#3c3c3c"/><rect x="10" y="5" width="2" height="1.5" fill="#46d046"/></svg>
<div class="t" style="left:162px;top:290.0px;letter-spacing:-0.6px;">Generic USB SD Reader USB Device</div>
<svg class="a" style="left:142px;top:315px;" width="14" height="8" viewBox="0 0 14 8"><path d="M1.5 2.5 Q2 0.5 4 0.5 H10 Q12 0.5 12.5 2.5 L13.5 4 H0.5Z" fill="#d8d8d8" stroke="#9a9a9a" stroke-width="0.8"/><rect x="0.5" y="4" width="13" height="3.5" fill="#3c3c3c"/><rect x="10" y="5" width="2" height="1.5" fill="#46d046"/></svg>
<div class="t" style="left:162px;top:308.0px;letter-spacing:-0.6px;">Generic USB SM Reader USB Device</div>
<svg class="a" style="left:142px;top:333px;" width="14" height="8" viewBox="0 0 14 8"><path d="M1.5 2.5 Q2 0.5 4 0.5 H10 Q12 0.5 12.5 2.5 L13.5 4 H0.5Z" fill="#d8d8d8" stroke="#9a9a9a" stroke-width="0.8"/><rect x="0.5" y="4" width="13" height="3.5" fill="#3c3c3c"/><rect x="10" y="5" width="2" height="1.5" fill="#46d046"/></svg>
<div class="t" style="left:162px;top:326.0px;letter-spacing:-0.95px;">KINGSTON SNVS500G</div>
<svg class="a" style="left:109px;top:348px;" width="5" height="8" viewBox="0 0 5 8"><path d="M0.8 0.8 L4.2 4 L0.8 7.2" fill="none" stroke="#a0a0a0" stroke-width="1.3"/></svg>
<svg class="a" style="left:126px;top:344px;" width="10" height="16" viewBox="0 0 10 16"><defs><linearGradient id="spg" x1="0" x2="1"><stop offset="0" stop-color="#4a4a4a"/><stop offset="0.35" stop-color="#d8d8d8"/><stop offset="1" stop-color="#8a8a8a"/></linearGradient></defs><path d="M0.5 5 H3.5 L9 0.5 V15.5 L3.5 11 H0.5Z" fill="url(#spg)" stroke="#7a7a7a" stroke-width="0.6"/><rect x="0.5" y="5" width="3" height="6" fill="#3a3a3a"/></svg>
<div class="t" style="left:143px;top:344.0px;">Звуковые, игровые и видеоустройства</div>
<svg class="a" style="left:109px;top:366px;" width="5" height="8" viewBox="0 0 5 8"><path d="M0.8 0.8 L4.2 4 L0.8 7.2" fill="none" stroke="#a0a0a0" stroke-width="1.3"/></svg>
<svg class="a" style="left:122px;top:364px;" width="16" height="12" viewBox="0 0 16 12"><rect x="0.5" y="0.5" width="15" height="10" fill="#eee" stroke="#666" stroke-width="0.8"/><path d="M2 3 H14 M2 5.5 H14 M2 8 H14" stroke="#999" stroke-dasharray="1 1"/><rect x="0" y="10" width="16" height="1.5" fill="#444"/></svg>
<div class="t" style="left:143px;top:362.0px;">Клавиатуры</div>
<svg class="a" style="left:109px;top:384px;" width="5" height="8" viewBox="0 0 5 8"><path d="M0.8 0.8 L4.2 4 L0.8 7.2" fill="none" stroke="#a0a0a0" stroke-width="1.3"/></svg>
<svg class="a" style="left:124px;top:380px;" width="14" height="16" viewBox="0 0 14 16"><rect x="1" y="2" width="6" height="13" fill="#2a2a2a"/><rect x="2.5" y="4" width="2" height="2" fill="#5d5"/><path d="M8 1 H14 V7 H8Z" fill="#3a8ad8"/><path d="M11 0 V8 M7 4 H15" stroke="#fff" stroke-width="1"/></svg>
<div class="t" style="left:143px;top:380.0px;">Компоненты программного обеспечения</div>
<svg class="a" style="left:109px;top:402px;" width="5" height="8" viewBox="0 0 5 8"><path d="M0.8 0.8 L4.2 4 L0.8 7.2" fill="none" stroke="#a0a0a0" stroke-width="1.3"/></svg>
<svg class="a" style="left:122px;top:398px;" width="16" height="16" viewBox="0 0 16 16"><rect x="0.5" y="0.5" width="15" height="11" fill="#5cc0f0" stroke="#2a80c0" stroke-width="0.8"/><rect x="5" y="12" width="6" height="1.5" fill="#888"/><rect x="2" y="14" width="12" height="1.5" fill="#aaa"/></svg>
<div class="t" style="left:143px;top:398.0px;">Компьютер</div>
<svg class="a" style="left:109px;top:420px;" width="5" height="8" viewBox="0 0 5 8"><path d="M0.8 0.8 L4.2 4 L0.8 7.2" fill="none" stroke="#a0a0a0" stroke-width="1.3"/></svg>
<svg class="a" style="left:122px;top:416px;" width="16" height="16" viewBox="0 0 16 16"><rect x="0.5" y="1" width="12" height="7" fill="#eee" stroke="#777" stroke-width="0.8"/><rect x="0.5" y="5" width="12" height="3" fill="#444"/><rect x="5" y="7" width="10" height="7" fill="#2a8a4a"/><rect x="6" y="14" width="8" height="2" fill="#f0b020"/></svg>
<div class="t" style="left:143px;top:416.0px;">Контроллеры IDE ATA/ATAPI</div>
<svg class="a" style="left:108px;top:439.5px;" width="8" height="5" viewBox="0 0 8 5"><path d="M0.8 0.8 L4 4.2 L7.2 0.8" fill="none" stroke="#404040" stroke-width="1.3"/></svg>
<svg class="a" style="left:126px;top:434px;" width="9" height="16" viewBox="0 0 9 16"><rect x="2.5" y="0.5" width="4" height="5" fill="#fff" stroke="#444" stroke-width="0.8"/><path d="M1 5 H8 V11 Q8 13 5.5 13 V15.5 H3.5 V13 Q1 13 1 11Z" fill="#3a3a3a"/></svg>
<div class="t" style="left:143px;top:434.0px;">Контроллеры USB</div>
<svg class="a" style="left:145px;top:452px;" width="9" height="16" viewBox="0 0 9 16"><rect x="2.5" y="0.5" width="4" height="5" fill="#fff" stroke="#444" stroke-width="0.8"/><path d="M1 5 H8 V11 Q8 13 5.5 13 V15.5 H3.5 V13 Q1 13 1 11Z" fill="#3a3a3a"/></svg>
<div class="t" style="left:162px;top:452.0px;">Generic USB Hub</div>
<svg class="a" style="left:145px;top:470px;" width="9" height="16" viewBox="0 0 9 16"><rect x="2.5" y="0.5" width="4" height="5" fill="#fff" stroke="#444" stroke-width="0.8"/><path d="M1 5 H8 V11 Q8 13 5.5 13 V15.5 H3.5 V13 Q1 13 1 11Z" fill="#3a3a3a"/></svg>
<div class="t" style="left:162px;top:470.0px;">Generic USB Hub</div>
<svg class="a" style="left:145px;top:488px;" width="9" height="16" viewBox="0 0 9 16"><rect x="2.5" y="0.5" width="4" height="5" fill="#fff" stroke="#444" stroke-width="0.8"/><path d="M1 5 H8 V11 Q8 13 5.5 13 V15.5 H3.5 V13 Q1 13 1 11Z" fill="#3a3a3a"/></svg>
<div class="t" style="left:162px;top:488.0px;">Корневой USB-концентратор</div>
<svg class="a" style="left:145px;top:506px;" width="9" height="16" viewBox="0 0 9 16"><rect x="2.5" y="0.5" width="4" height="5" fill="#fff" stroke="#444" stroke-width="0.8"/><path d="M1 5 H8 V11 Q8 13 5.5 13 V15.5 H3.5 V13 Q1 13 1 11Z" fill="#3a3a3a"/></svg>
<svg class="a" style="left:146px;top:510px;" width="12" height="11" viewBox="0 0 12 11"><path d="M6 0.5 L11.5 10.5 H0.5Z" fill="#f5b800" stroke="#8a6a00" stroke-width="0.6"/><path d="M6 3.5 V7" stroke="#000" stroke-width="1.3"/><rect x="5.3" y="8" width="1.4" height="1.4" fill="#000"/></svg>
<div class="t" style="left:162px;top:506.0px;">Неизвестное USB-устройство (сбой запроса дескриптора устройства)</div>
<svg class="a" style="left:145px;top:524px;" width="9" height="16" viewBox="0 0 9 16"><rect x="2.5" y="0.5" width="4" height="5" fill="#fff" stroke="#444" stroke-width="0.8"/><path d="M1 5 H8 V11 Q8 13 5.5 13 V15.5 H3.5 V13 Q1 13 1 11Z" fill="#3a3a3a"/></svg>
<div class="t" style="left:162px;top:524.0px;">Расширяемый хост-контроллер Intel(R) USB 3.10</div>
<svg class="a" style="left:145px;top:542px;" width="9" height="16" viewBox="0 0 9 16"><rect x="2.5" y="0.5" width="4" height="5" fill="#fff" stroke="#444" stroke-width="0.8"/><path d="M1 5 H8 V11 Q8 13 5.5 13 V15.5 H3.5 V13 Q1 13 1 11Z" fill="#3a3a3a"/></svg>
<div class="t" style="left:162px;top:542.0px;">Составное USB устройство</div>
<svg class="a" style="left:145px;top:560px;" width="9" height="16" viewBox="0 0 9 16"><rect x="2.5" y="0.5" width="4" height="5" fill="#fff" stroke="#444" stroke-width="0.8"/><path d="M1 5 H8 V11 Q8 13 5.5 13 V15.5 H3.5 V13 Q1 13 1 11Z" fill="#3a3a3a"/></svg>
<div class="t" style="left:162px;top:560.0px;">Составное USB устройство</div>
<svg class="a" style="left:145px;top:578px;" width="9" height="16" viewBox="0 0 9 16"><rect x="2.5" y="0.5" width="4" height="5" fill="#fff" stroke="#444" stroke-width="0.8"/><path d="M1 5 H8 V11 Q8 13 5.5 13 V15.5 H3.5 V13 Q1 13 1 11Z" fill="#3a3a3a"/></svg>
<div class="t" style="left:162px;top:578.0px;">Корневой USB-концентратор (USB 3.0)</div>
</div></div>
<div class="a" style="left:840px;top:127px;width:17px;height:460px;background:#f0f0f0;"></div>
<svg class="a" style="left:844px;top:133px;" width="8" height="5" viewBox="0 0 8 5"><path d="M0.8 4.2 L4 1 L7.2 4.2" fill="none" stroke="#606060" stroke-width="1.5"/></svg>
<div class="a" style="left:842px;top:144px;width:13px;height:305px;background:#cdcdcd;"></div>
<div class="a" style="left:80px;top:587px;width:778px;height:25px;background:#f0f0f0;border-top:1px solid #d8d8d8;"></div>
<div class="a" style="left:163px;top:156px;width:1426px;height:752px;background:#fff;border:1px solid #b4b4b4;box-shadow:0 0 14px rgba(0,0,0,0.3);"></div>
<svg class="a" style="left:172px;top:163px;" width="17" height="16" viewBox="0 0 17 16"><path d="M8 1 Q15 1 15.5 7 Q16 11 12 11 Q10 11 10 13 Q10 15.5 7 15.5 Q1 15 0.7 8 Q0.5 1 8 1Z" fill="#d8e6f5" stroke="#7a9ac0" stroke-width="0.8"/><circle cx="4" cy="8" r="1.5" fill="#e33"/><circle cx="6" cy="4.5" r="1.5" fill="#3b3"/><circle cx="10" cy="4" r="1.5" fill="#39e"/><circle cx="6" cy="11.5" r="1.5" fill="#fc0"/><path d="M15 0 L11 12" stroke="#f08a20" stroke-width="2.2"/></svg>
<div class="a" style="left:195px;top:166px;width:1px;height:12px;background:#c0c0c0;"></div>
<svg class="a" style="left:206px;top:164px;" width="14" height="14" viewBox="0 0 14 14"><rect x="0.5" y="0.5" width="13" height="13" fill="#8a5ab8" stroke="#6a3a98" stroke-width="0.8"/><rect x="3" y="1" width="8" height="5" fill="#fff"/><rect x="3" y="9" width="8" height="4.5" fill="#ccc"/><rect x="7" y="10" width="2" height="3" fill="#555"/></svg>
<svg class="a" style="left:229px;top:163px;" width="14" height="16" viewBox="0 0 14 16"><path d="M3 4.5 H8 Q13 4.5 13 9.5 Q13 14.5 8 15" fill="none" stroke="#1a8ae0" stroke-width="2.4"/><path d="M0 4.5 L5 0 V9Z" fill="#1a8ae0"/></svg>
<svg class="a" style="left:250px;top:163px;" width="14" height="16" viewBox="0 0 14 16"><path d="M11 4.5 H6 Q1 4.5 1 9.5 Q1 14.5 6 15" fill="none" stroke="#a8bcd4" stroke-width="2.4"/><path d="M14 4.5 L9 0 V9Z" fill="#a8bcd4"/></svg>
<svg class="a" style="left:271px;top:169px;" width="9" height="7" viewBox="0 0 9 7"><rect x="0" y="0" width="9" height="1.2" fill="#222"/><path d="M0.5 2.5 H8.5 L4.5 6.5Z" fill="#222"/></svg>
<div class="a" style="left:287px;top:165px;width:1px;height:13px;background:#c0c0c0;"></div>
<div class="t" style="left:296px;top:163.0px;">Безымянный - Paint</div>
<div class="a" style="left:1469px;top:171px;width:10px;height:1px;background:#000;"></div>
<div class="a" style="left:1514px;top:166px;width:10px;height:10px;border:1px solid #000;"></div>
<svg class="a" style="left:1560px;top:166px;" width="10" height="10" viewBox="0 0 10 10"><path d="M0 0 L10 10 M10 0 L0 10" stroke="#000" stroke-width="1.1"/></svg>
<div class="a" style="left:164px;top:187px;width:56px;height:23px;background:#1979ca;"></div>
<div class="t" style="left:178px;top:191.0px;color:#fff;">Файл</div>
<div class="a" style="left:220px;top:187px;width:70px;height:24px;background:#f5f6f7;border:1px solid #dadbdc;border-bottom:none;"></div>
<div class="t" style="left:234px;top:191.0px;color:#3c3c3c;">Главная</div>
<div class="t" style="left:305px;top:191.0px;color:#3c3c3c;">Вид</div>
<svg class="a" style="left:1550px;top:194px;" width="10" height="6" viewBox="0 0 10 6"><path d="M0.5 5.5 L5 1 L9.5 5.5" fill="none" stroke="#a0a0a0" stroke-width="1.1"/></svg>
<svg class="a" style="left:1569px;top:190px;" width="16" height="16" viewBox="0 0 16 16"><circle cx="8" cy="8" r="8" fill="#1565c0"/><text x="8" y="12.5" font-size="12" font-weight="bold" fill="#fff" text-anchor="middle" font-family="Liberation Sans">?</text></svg>
<div class="a" style="left:164px;top:210px;width:1424px;height:92px;background:#f5f6f7;border-top:1px solid #dadbdc;"></div>
<div class="a" style="left:317px;top:213px;width:1px;height:87px;background:#e2e3e4;"></div>
<div class="a" style="left:504px;top:213px;width:1px;height:87px;background:#e2e3e4;"></div>
<div class="a" style="left:585px;top:213px;width:1px;height:87px;background:#e2e3e4;"></div>
<div class="a" style="left:638px;top:213px;width:1px;height:87px;background:#e2e3e4;"></div>
<div class="a" style="left:888px;top:213px;width:1px;height:87px;background:#e2e3e4;"></div>
<div class="a" style="left:952px;top:213px;width:1px;height:87px;background:#e2e3e4;"></div>
<div class="a" style="left:1333px;top:213px;width:1px;height:87px;background:#e2e3e4;"></div>
<div class="a" style="left:1447px;top:213px;width:1px;height:87px;background:#e2e3e4;"></div>
<div class="t" style="left:140px;top:285px;width:200px;text-align:center;color:#3c3c3c">Буфер обмена</div>
<div class="t" style="left:309px;top:285px;width:200px;text-align:center;color:#3c3c3c">Изображение</div>
<div class="t" style="left:443px;top:285px;width:200px;text-align:center;color:#3c3c3c">Инструменты</div>
<div class="t" style="left:662px;top:285px;width:200px;text-align:center;color:#3c3c3c">Фигуры</div>
<div class="t" style="left:1041px;top:285px;width:200px;text-align:center;color:#3c3c3c">Цвета</div>
<svg class="a" style="left:183px;top:218px;" width="25" height="31" viewBox="0 0 25 31"><rect x="1" y="3" width="23" height="27" rx="2" fill="#c49a5a" stroke="#8a6a3a" stroke-width="1"/><rect x="4" y="6" width="17" height="21" fill="#fff"/><path d="M6 10 H19 M6 13 H19 M6 16 H19 M6 19 H19 M6 22 H19" stroke="#b8c8d8" stroke-width="1"/><path d="M8 5 L12.5 0.5 L17 5Z" fill="#ddd" stroke="#888" stroke-width="0.8"/></svg>
<div class="t" style="left:95px;top:252px;width:200px;text-align:center;color:#3c3c3c">Вставить</div>
<svg class="a" style="left:191px;top:271px;" width="7" height="4" viewBox="0 0 7 4"><path d="M0 0 H7 L3.5 4Z" fill="#222"/></svg>
<svg class="a" style="left:226px;top:218px;" width="11" height="15" viewBox="0 0 11 15"><path d="M2 0.5 L7 10 M9 0.5 L4 10" stroke="#a8b8cc" stroke-width="1.3"/><circle cx="3" cy="12" r="2.2" fill="none" stroke="#a8b8cc" stroke-width="1.2"/><circle cx="8" cy="12" r="2.2" fill="none" stroke="#a8b8cc" stroke-width="1.2"/></svg>
<div class="t" style="left:243px;top:218.0px;color:#a7a7a7;">Вырезать</div>
<svg class="a" style="left:224px;top:240px;" width="15" height="16" viewBox="0 0 15 16"><path d="M0.5 0.5 H6 L8 2.5 V11 H0.5Z" fill="#f4f6fa" stroke="#b8c4d4" stroke-width="0.8"/><path d="M6 4.5 H11.5 L14.5 7.5 V15.5 H6Z" fill="#f4f6fa" stroke="#b8c4d4" stroke-width="0.8"/><path d="M8 9 H12 M8 11 H12 M8 13 H12" stroke="#b8c4d4"/></svg>
<div class="t" style="left:243px;top:240.0px;color:#a7a7a7;">Копировать</div>
<div class="a" style="left:322px;top:215px;width:56px;height:66px;background:#c9e0f7;border:1px solid #90c0ec;"></div>
<div class="a" style="left:323px;top:252px;width:54px;height:1px;background:#90c0ec;"></div>
<div class="a" style="left:334px;top:222px;width:31px;height:25px;border:1.5px dashed #2a5aa0;"></div>
<div class="t" style="left:249px;top:252px;width:200px;text-align:center;color:#3c3c3c">Выделить</div>
<svg class="a" style="left:346px;top:271px;" width="7" height="4" viewBox="0 0 7 4"><path d="M0 0 H7 L3.5 4Z" fill="#222"/></svg>
<svg class="a" style="left:383px;top:219px;" width="13" height="13" viewBox="0 0 13 13"><path d="M3 0 V10 H13 M0 3 H10 V13 M3 10 L10 3" fill="none" stroke="#a8b8cc" stroke-width="1.1"/></svg>
<div class="t" style="left:399.5px;top:218.0px;color:#a7a7a7;letter-spacing:-0.1px;">Обрезать</div>
<svg class="a" style="left:383px;top:242px;" width="14" height="13" viewBox="0 0 14 13"><rect x="4.5" y="0.5" width="9" height="8" fill="#fff" stroke="#1a6ac0" stroke-width="1"/><rect x="0.5" y="6.5" width="6" height="6" fill="#fff" stroke="#1a6ac0" stroke-width="1"/></svg>
<div class="t" style="left:399.5px;top:240.0px;color:#222;letter-spacing:-0.2px;">Изменить размер</div>
<svg class="a" style="left:382px;top:263px;" width="15" height="14" viewBox="0 0 15 14"><path d="M0 13.5 L8 7 V13.5Z" fill="#bbb"/><path d="M9 13.5 L9 3 L14.5 13.5Z" fill="#1a80d0"/><path d="M2 6 Q3 1 8 1.5" fill="none" stroke="#1a80d0" stroke-width="1.2"/></svg>
<div class="t" style="left:399.5px;top:262.0px;color:#222;letter-spacing:-0.1px;">Повернуть</div>
<svg class="a" style="left:460px;top:268px;" width="7" height="4" viewBox="0 0 7 4"><path d="M0 0 H7 L3.5 4Z" fill="#222"/></svg>
<svg class="a" style="left:512px;top:227px;" width="16" height="16" viewBox="0 0 16 16"><path d="M1 15 L3 10 L13 0.5 L15.5 3 L6 13Z" fill="#f0c040" stroke="#8a6a20" stroke-width="0.7"/><path d="M1 15 L3 10 L6 13Z" fill="#e8c8a0"/><path d="M12 1.5 L14.5 4" stroke="#3a9a3a" stroke-width="1.5"/></svg>
<svg class="a" style="left:536px;top:226px;" width="17" height="16" viewBox="0 0 17 16"><path d="M8 1 L15 8 L9 14 L2 7Z" fill="#c8e0f8" stroke="#3a7ac0" stroke-width="0.8"/><path d="M2 7 Q0 9 1 12 L3 9Z" fill="#e85a1a"/><path d="M8 1 V6" stroke="#666"/></svg>
<div class="t" style="left:561px;top:226px;font-family:'Liberation Serif';font-weight:bold;font-size:17px;line-height:18px;color:#1f3a7a">A</div>
<svg class="a" style="left:512px;top:255px;" width="17" height="15" viewBox="0 0 17 15"><path d="M1 10 L9 1 L16 5 L8 14Z" fill="#f08a8a" stroke="#c05050" stroke-width="0.7"/><path d="M1 10 L8 14 L8 11.5 L2 8Z" fill="#f8c0c0"/></svg>
<svg class="a" style="left:537px;top:254px;" width="15" height="16" viewBox="0 0 15 16"><path d="M1 15 L9 7" stroke="#888" stroke-width="1.5"/><path d="M8 5 L12 1 Q15 1 15 4 L11 8Z" fill="#1a6ac0"/><path d="M6 6 L10 10" stroke="#1a6ac0" stroke-width="1.8"/></svg>
<svg class="a" style="left:560px;top:255px;" width="15" height="15" viewBox="0 0 15 15"><circle cx="6" cy="6" r="4.8" fill="#e8f2fa" stroke="#6a7a8a" stroke-width="1.2"/><path d="M9.5 9.5 L14 14" stroke="#8a5a20" stroke-width="2.2"/></svg>
<div class="a" style="left:595px;top:218px;width:32px;height:32px;background:#fff;border:1px solid #a0a0a0;"></div>
<svg class="a" style="left:596px;top:219px;" width="30" height="30" viewBox="0 0 30 30"><defs><linearGradient id="brh" x1="0" y1="0" x2="1" y2="0"><stop offset="0" stop-color="#f0f4f8"/><stop offset="1" stop-color="#7a8a9a"/></linearGradient></defs><path d="M15 6 Q9 5 6 10 Q2 17 6 23 Q10 28 18 26 L22 24" fill="none" stroke="#f26a1e" stroke-width="3.2" stroke-linecap="round"/><path d="M13 6 Q17 3 18 5" fill="none" stroke="#f26a1e" stroke-width="2"/><path d="M29 1.5 L17 15 L20 18 L29.5 5Z" fill="url(#brh)" stroke="#6a7a8a" stroke-width="0.6"/><ellipse cx="14" cy="21" rx="5.5" ry="7.5" transform="rotate(45 14 21)" fill="#a87440"/><path d="M9 25 Q12 27 16 25" stroke="#d8b890" stroke-width="1" fill="none"/></svg>
<div class="t" style="left:510px;top:252px;width:200px;text-align:center;color:#3c3c3c">Кисти</div>
<svg class="a" style="left:607px;top:271px;" width="7" height="4" viewBox="0 0 7 4"><path d="M0 0 H7 L3.5 4Z" fill="#222"/></svg>
<div class="a" style="left:644px;top:218px;width:157px;height:60px;background:#fff;border:1px solid #dadbdc;"></div>
<div class="a" style="left:786px;top:219px;width:14px;height:58px;background:#f5f6f7;border-left:1px solid #e8e8e8;"></div>
<svg class="a" style="left:646px;top:220.0px;" width="20" height="19" viewBox="0 0 20 19"><path d="M3 2 L17 16" stroke="#1a5fa8" stroke-width="1.1" fill="none"/></svg>
<svg class="a" style="left:666px;top:220.0px;" width="20" height="19" viewBox="0 0 20 19"><path d="M2 16 Q4 6 8 11 Q12 16 15 4" stroke="#1a5fa8" stroke-width="1.1" fill="none"/></svg>
<svg class="a" style="left:686px;top:220.0px;" width="20" height="19" viewBox="0 0 20 19"><ellipse cx="10" cy="9" rx="7.5" ry="5.8" stroke="#1a5fa8" stroke-width="1.1" fill="none"/></svg>
<svg class="a" style="left:706px;top:220.0px;" width="20" height="19" viewBox="0 0 20 19"><rect x="2.5" y="3.5" width="14" height="11" stroke="#1a5fa8" stroke-width="1.1" fill="none"/></svg>
<svg class="a" style="left:726px;top:220.0px;" width="20" height="19" viewBox="0 0 20 19"><rect x="2.5" y="3.5" width="15" height="11" rx="3" stroke="#1a5fa8" stroke-width="1.1" fill="none"/></svg>
<svg class="a" style="left:746px;top:220.0px;" width="20" height="19" viewBox="0 0 20 19"><path d="M2.5 15 L6 3.5 H16 L12 9 H17 V15Z" stroke="#1a5fa8" stroke-width="1.1" fill="none"/></svg>
<svg class="a" style="left:766px;top:220.0px;" width="20" height="19" viewBox="0 0 20 19"><path d="M10 2.5 L17.5 15 H2.5Z" stroke="#1a5fa8" stroke-width="1.1" fill="none"/></svg>
<svg class="a" style="left:646px;top:239.5px;" width="20" height="19" viewBox="0 0 20 19"><path d="M2.5 2.5 V15 H15Z" stroke="#1a5fa8" stroke-width="1.1" fill="none"/></svg>
<svg class="a" style="left:666px;top:239.5px;" width="20" height="19" viewBox="0 0 20 19"><path d="M10 2 L17 9 L10 16 L3 9Z" stroke="#1a5fa8" stroke-width="1.1" fill="none"/></svg>
<svg class="a" style="left:686px;top:239.5px;" width="20" height="19" viewBox="0 0 20 19"><path d="M10 2 L17.5 7.5 L14.5 16 H5.5 L2.5 7.5Z" stroke="#1a5fa8" stroke-width="1.1" fill="none"/></svg>
<svg class="a" style="left:706px;top:239.5px;" width="20" height="19" viewBox="0 0 20 19"><path d="M6 2 H14 L18 9 L14 16 H6 L2 9Z" stroke="#1a5fa8" stroke-width="1.1" fill="none"/></svg>
<svg class="a" style="left:726px;top:239.5px;" width="20" height="19" viewBox="0 0 20 19"><path d="M2 6 H10 V2 L17 9 L10 16 V12 H2Z" stroke="#1a5fa8" stroke-width="1.1" fill="none"/></svg>
<svg class="a" style="left:746px;top:239.5px;" width="20" height="19" viewBox="0 0 20 19"><path d="M18 6 H10 V2 L3 9 L10 16 V12 H18Z" stroke="#1a5fa8" stroke-width="1.1" fill="none"/></svg>
<svg class="a" style="left:766px;top:239.5px;" width="20" height="19" viewBox="0 0 20 19"><path d="M6 17 V9 H2 L10 1.5 L18 9 H14 V17Z" stroke="#1a5fa8" stroke-width="1.1" fill="none"/></svg>
<svg class="a" style="left:646px;top:259.0px;" width="20" height="19" viewBox="0 0 20 19"><path d="M6 1.5 V9 H2 L10 16.5 L18 9 H14 V1.5Z" stroke="#1a5fa8" stroke-width="1.1" fill="none"/></svg>
<svg class="a" style="left:666px;top:259.0px;" width="20" height="19" viewBox="0 0 20 19"><path d="M10 2 L11.5 7.5 L17 9 L11.5 10.5 L10 16 L8.5 10.5 L3 9 L8.5 7.5Z" stroke="#1a5fa8" stroke-width="1.1" fill="none"/></svg>
<svg class="a" style="left:686px;top:259.0px;" width="20" height="19" viewBox="0 0 20 19"><path d="M10 2 L12 7 L17.5 7.3 L13.2 10.6 L14.8 16 L10 12.8 L5.2 16 L6.8 10.6 L2.5 7.3 L8 7Z" stroke="#1a5fa8" stroke-width="1.1" fill="none"/></svg>
<svg class="a" style="left:706px;top:259.0px;" width="20" height="19" viewBox="0 0 20 19"><path d="M10 1.5 L12 5.5 L16.5 5 L14 9 L16.5 13 L12 12.5 L10 16.5 L8 12.5 L3.5 13 L6 9 L3.5 5 L8 5.5Z" stroke="#1a5fa8" stroke-width="1.1" fill="none"/></svg>
<svg class="a" style="left:726px;top:259.0px;" width="20" height="19" viewBox="0 0 20 19"><path d="M4.5 3 H15.5 Q17.5 3 17.5 5 V11 Q17.5 13 15.5 13 H9 L5 17 V13 H4.5 Q2.5 13 2.5 11 V5 Q2.5 3 4.5 3Z" stroke="#1a5fa8" stroke-width="1.1" fill="none"/></svg>
<svg class="a" style="left:746px;top:259.0px;" width="20" height="19" viewBox="0 0 20 19"><path d="M6 13.5 Q2 12 2 8.5 Q2 3 10 3 Q18 3 18 8.5 Q18 14 10 14 L5 17Z" stroke="#1a5fa8" stroke-width="1.1" fill="none"/></svg>
<svg class="a" style="left:766px;top:259.0px;" width="20" height="19" viewBox="0 0 20 19"><path d="M5 13 Q1 12 2.5 9 Q1 5 5 5 Q6 2 10 3 Q13 1.5 15 4.5 Q19 5 17.5 9 Q19 13 15 13 Q13 16 10 14 Q7 16 5 13Z" stroke="#1a5fa8" stroke-width="1.1" fill="none"/></svg>
<svg class="a" style="left:790px;top:224px;" width="7" height="4" viewBox="0 0 7 4"><path d="M0 4 H7 L3.5 0Z" fill="#b8b8b8"/></svg>
<svg class="a" style="left:790px;top:246px;" width="7" height="4" viewBox="0 0 7 4"><path d="M0 0 H7 L3.5 4Z" fill="#3c3c3c"/></svg>
<svg class="a" style="left:790px;top:264px;" width="7" height="6" viewBox="0 0 7 6"><rect x="0" y="0" width="7" height="1.2" fill="#3c3c3c"/><path d="M0 2 H7 L3.5 6Z" fill="#3c3c3c"/></svg>
<svg class="a" style="left:807px;top:220px;" width="16" height="15" viewBox="0 0 16 15"><rect x="0.5" y="3.5" width="11" height="11" fill="none" stroke="#a8b4c4" stroke-width="1"/><path d="M4 11 L13 2 L15 4 L6 13Z" fill="#fff" stroke="#a8b4c4" stroke-width="1"/></svg>
<div class="t" style="left:826px;top:218.0px;color:#a7a7a7;">Контур</div>
<svg class="a" style="left:867px;top:224px;" width="6" height="3" viewBox="0 0 6 3"><path d="M0 0 H6 L3 3Z" fill="#b0b0b0"/></svg>
<svg class="a" style="left:807px;top:240px;" width="16" height="16" viewBox="0 0 16 16"><path d="M7 1 L14 8 L8 13 L2 7Z" fill="#c8d0dc" stroke="#a8b4c4" stroke-width="1"/><rect x="0" y="13" width="16" height="3" fill="#c0c8d4"/></svg>
<div class="t" style="left:826px;top:240.0px;color:#a7a7a7;">Заливка</div>
<svg class="a" style="left:874px;top:246px;" width="6" height="3" viewBox="0 0 6 3"><path d="M0 0 H6 L3 3Z" fill="#b0b0b0"/></svg>
<div class="a" style="left:903px;top:218px;width:32px;height:1px;background:#7a8aa8;"></div>
<div class="a" style="left:903px;top:223px;width:32px;height:2px;background:#7a8aa8;"></div>
<div class="a" style="left:903px;top:231px;width:32px;height:3px;background:#7a8aa8;"></div>
<div class="a" style="left:903px;top:239px;width:32px;height:5px;background:#7a8aa8;"></div>
<div class="t" style="left:818px;top:252px;width:200px;text-align:center;color:#a7a7a7">Толщина</div>
<svg class="a" style="left:915px;top:271px;" width="6" height="3" viewBox="0 0 6 3"><path d="M0 0 H6 L3 3Z" fill="#b0b0b0"/></svg>
<div class="a" style="left:957px;top:215px;width:43px;height:66px;background:#c9e0f7;border:1px solid #90c0ec;"></div>
<div class="a" style="left:962px;top:218px;width:32px;height:32px;background:#000;border:2px solid #7a7a7a;box-shadow:inset 0 0 0 1px #fff;"></div>
<div class="a" style="left:964px;top:220px;width:28px;height:28px;background:#000;"></div>
<div class="t" style="left:878px;top:252px;width:200px;text-align:center;color:#3c3c3c">Цвет</div>
<div class="t" style="left:878px;top:265px;width:200px;text-align:center;color:#3c3c3c">1</div>
<div class="a" style="left:1008px;top:222px;width:25px;height:25px;background:#fff;border:1px solid #7a7a7a;"></div>
<div class="t" style="left:920px;top:252px;width:200px;text-align:center;color:#3c3c3c">Цвет</div>
<div class="t" style="left:920px;top:265px;width:200px;text-align:center;color:#3c3c3c">2</div>
<div class="a" style="left:1042px;top:216px;width:20px;height:20px;background:#000000;border:1px solid #a0a0a0;box-shadow:inset 0 0 0 1px #fff;"></div>
<div class="a" style="left:1064px;top:216px;width:20px;height:20px;background:#7f7f7f;border:1px solid #a0a0a0;box-shadow:inset 0 0 0 1px #fff;"></div>
<div class="a" style="left:1086px;top:216px;width:20px;height:20px;background:#880015;border:1px solid #a0a0a0;box-shadow:inset 0 0 0 1px #fff;"></div>
<div class="a" style="left:1108px;top:216px;width:20px;height:20px;background:#ed1c24;border:1px solid #a0a0a0;box-shadow:inset 0 0 0 1px #fff;"></div>
<div class="a" style="left:1130px;top:216px;width:20px;height:20px;background:#ff7f27;border:1px solid #a0a0a0;box-shadow:inset 0 0 0 1px #fff;"></div>
<div class="a" style="left:1152px;top:216px;width:20px;height:20px;background:#fff200;border:1px solid #a0a0a0;box-shadow:inset 0 0 0 1px #fff;"></div>
<div class="a" style="left:1174px;top:216px;width:20px;height:20px;background:#22b14c;border:1px solid #a0a0a0;box-shadow:inset 0 0 0 1px #fff;"></div>
<div class="a" style="left:1196px;top:216px;width:20px;height:20px;background:#00a2e8;border:1px solid #a0a0a0;box-shadow:inset 0 0 0 1px #fff;"></div>
<div class="a" style="left:1218px;top:216px;width:20px;height:20px;background:#3f48cc;border:1px solid #a0a0a0;box-shadow:inset 0 0 0 1px #fff;"></div>
<div class="a" style="left:1240px;top:216px;width:20px;height:20px;background:#a349a4;border:1px solid #a0a0a0;box-shadow:inset 0 0 0 1px #fff;"></div>
<div class="a" style="left:1042px;top:238px;width:20px;height:20px;background:#ffffff;border:1px solid #a0a0a0;box-shadow:inset 0 0 0 1px #fff;"></div>
<div class="a" style="left:1064px;top:238px;width:20px;height:20px;background:#c3c3c3;border:1px solid #a0a0a0;box-shadow:inset 0 0 0 1px #fff;"></div>
<div class="a" style="left:1086px;top:238px;width:20px;height:20px;background:#b97a57;border:1px solid #a0a0a0;box-shadow:inset 0 0 0 1px #fff;"></div>
<div class="a" style="left:1108px;top:238px;width:20px;height:20px;background:#ffaec9;border:1px solid #a0a0a0;box-shadow:inset 0 0 0 1px #fff;"></div>
<div class="a" style="left:1130px;top:238px;width:20px;height:20px;background:#ffc90e;border:1px solid #a0a0a0;box-shadow:inset 0 0 0 1px #fff;"></div>
<div class="a" style="left:1152px;top:238px;width:20px;height:20px;background:#efe4b0;border:1px solid #a0a0a0;box-shadow:inset 0 0 0 1px #fff;"></div>
<div class="a" style="left:1174px;top:238px;width:20px;height:20px;background:#b5e61d;border:1px solid #a0a0a0;box-shadow:inset 0 0 0 1px #fff;"></div>
<div class="a" style="left:1196px;top:238px;width:20px;height:20px;background:#99d9ea;border:1px solid #a0a0a0;box-shadow:inset 0 0 0 1px #fff;"></div>
<div class="a" style="left:1218px;top:238px;width:20px;height:20px;background:#7092be;border:1px solid #a0a0a0;box-shadow:inset 0 0 0 1px #fff;"></div>
<div class="a" style="left:1240px;top:238px;width:20px;height:20px;background:#c8bfe7;border:1px solid #a0a0a0;box-shadow:inset 0 0 0 1px #fff;"></div>
<div class="a" style="left:1042px;top:260px;width:20px;height:20px;background:#f5f6f7;border:1px solid #a0a0a0;"></div>
<div class="a" style="left:1064px;top:260px;width:20px;height:20px;background:#f5f6f7;border:1px solid #a0a0a0;"></div>
<div class="a" style="left:1086px;top:260px;width:20px;height:20px;background:#f5f6f7;border:1px solid #a0a0a0;"></div>
<div class="a" style="left:1108px;top:260px;width:20px;height:20px;background:#f5f6f7;border:1px solid #a0a0a0;"></div>
<div class="a" style="left:1130px;top:260px;width:20px;height:20px;background:#f5f6f7;border:1px solid #a0a0a0;"></div>
<div class="a" style="left:1152px;top:260px;width:20px;height:20px;background:#f5f6f7;border:1px solid #a0a0a0;"></div>
<div class="a" style="left:1174px;top:260px;width:20px;height:20px;background:#f5f6f7;border:1px solid #a0a0a0;"></div>
<div class="a" style="left:1196px;top:260px;width:20px;height:20px;background:#f5f6f7;border:1px solid #a0a0a0;"></div>
<div class="a" style="left:1218px;top:260px;width:20px;height:20px;background:#f5f6f7;border:1px solid #a0a0a0;"></div>
<div class="a" style="left:1240px;top:260px;width:20px;height:20px;background:#f5f6f7;border:1px solid #a0a0a0;"></div>
<div class="a" style="left:1279px;top:219px;width:29px;height:30px;border:1px solid #b0b0b0;background:#fff;"></div>
<div class="a" style="left:1281px;top:221px;width:25px;height:26px;background:linear-gradient(to bottom,rgba(128,128,128,0) 0%,rgba(128,128,128,1) 100%),linear-gradient(to right,#f00,#ff0,#0f0,#0ff,#00f,#f0f,#f00);"></div>
<div class="t" style="left:1193px;top:252px;width:200px;text-align:center;color:#3c3c3c">Изменение</div>
<div class="t" style="left:1193px;top:265px;width:200px;text-align:center;color:#3c3c3c">цветов</div>
<div class="a" style="left:1374px;top:219px;width:30px;height:30px;background:#fafafa;border:1px solid #c8c8c8;"></div>
<svg class="a" style="left:1381px;top:222px;" width="17" height="24" viewBox="0 0 17 24"><defs><linearGradient id="p3g" x1="0" y1="0" x2="1" y2="1"><stop offset="0" stop-color="#2ad0f0"/><stop offset="0.45" stop-color="#8a5ae0"/><stop offset="0.8" stop-color="#f03a6a"/><stop offset="1" stop-color="#f5a010"/></linearGradient></defs><path d="M8.5 0.5 Q16.5 0.5 16.5 8.5 Q16.5 15 5 23.5 Q7 16 2.5 12.5 Q0.5 10.5 0.5 8.5 Q0.5 0.5 8.5 0.5Z" fill="url(#p3g)"/></svg>
<div class="t" style="left:1289px;top:252px;width:200px;text-align:center;color:#3c3c3c">Изменить с</div>
<div class="t" style="left:1289px;top:265px;width:200px;text-align:center;color:#3c3c3c">помощью Paint 3D</div>
<div class="a" style="left:164px;top:302px;width:1408px;height:562px;background:#c9d3e2;"></div>
<div class="a" style="left:169px;top:308px;width:1403px;height:556px;overflow:hidden">
<div class="a" style="left:0;top:0;width:1920px;height:1080px">
<div class="a" style="left:0px;top:0px;width:1920px;height:1040px;background:#fff;"></div>
<svg class="a" style="left:2px;top:5px;" width="16" height="13" viewBox="0 0 16 13"><rect x="0.5" y="0.5" width="15" height="12" fill="#7cc3f0" stroke="#1c6fb8"/><circle cx="5" cy="5" r="2.6" fill="#f5b73b"/><path d="M5 5 L5 2.4 A2.6 2.6 0 0 1 7.6 5Z" fill="#2f7fd0"/><rect x="9" y="3" width="5" height="2" fill="#fff"/><rect x="9" y="6" width="5" height="2" fill="#fff"/><rect x="2" y="10" width="5" height="1.5" fill="#f09a1a"/></svg>
<div class="t" style="left:23px;top:4.0px;color:#999;">Все элементы панели управления</div>
<svg class="a" style="left:13px;top:35px;" width="13" height="11" viewBox="0 0 13 11"><path d="M6 0.7 L1 5.5 L6 10.3 M1 5.5 H12.5" fill="none" stroke="#6d6d6d" stroke-width="1.3"/></svg>
<svg class="a" style="left:43px;top:35px;" width="13" height="11" viewBox="0 0 13 11"><path d="M7 0.7 L12 5.5 L7 10.3 M12 5.5 H0.5" fill="none" stroke="#c8c8c8" stroke-width="1.3"/></svg>
<svg class="a" style="left:70px;top:37px;" width="7" height="5" viewBox="0 0 7 5"><path d="M0.5 0.8 L3.5 3.8 L6.5 0.8" fill="none" stroke="#6d6d6d" stroke-width="1.2"/></svg>
<svg class="a" style="left:87px;top:34px;" width="12" height="12" viewBox="0 0 12 12"><path d="M0.7 6 L6 0.7 L11.3 6 M6 0.7 V12" fill="none" stroke="#6d6d6d" stroke-width="1.3"/></svg>
<div class="a" style="left:106px;top:29px;width:1743px;height:22px;background:#fff;border:1px solid #d9d9d9;"></div>
<svg class="a" style="left:109px;top:33px;" width="16" height="13" viewBox="0 0 16 13"><rect x="0.5" y="0.5" width="15" height="12" fill="#7cc3f0" stroke="#1c6fb8"/><circle cx="5" cy="5" r="2.6" fill="#f5b73b"/><path d="M5 5 L5 2.4 A2.6 2.6 0 0 1 7.6 5Z" fill="#2f7fd0"/><rect x="9" y="3" width="5" height="2" fill="#fff"/><rect x="9" y="6" width="5" height="2" fill="#fff"/><rect x="2" y="10" width="5" height="1.5" fill="#f09a1a"/></svg>
<svg class="a" style="left:132px;top:36px;" width="5" height="8" viewBox="0 0 5 8"><path d="M0.8 0.8 L4 4 L0.8 7.2" fill="none" stroke="#6d6d6d" stroke-width="1.2"/></svg>
<div class="t" style="left:146px;top:32.0px;">Панель управления</div>
<svg class="a" style="left:263px;top:36px;" width="5" height="8" viewBox="0 0 5 8"><path d="M0.8 0.8 L4 4 L0.8 7.2" fill="none" stroke="#6d6d6d" stroke-width="1.2"/></svg>
<div class="t" style="left:277px;top:32.0px;">Все элементы панели управления</div>
<div class="a" style="left:1855px;top:29px;width:53px;height:22px;background:#fff;border:1px solid #d9d9d9;"></div>
<svg class="a" style="left:1888px;top:35px;" width="12" height="12" viewBox="0 0 12 12"><circle cx="7.5" cy="4.5" r="3.5" fill="none" stroke="#333" stroke-width="1.3"/><path d="M5 7 L1 11" stroke="#333" stroke-width="1.6"/></svg>
<svg class="a" style="left:1890px;top:5px;" width="11" height="11" viewBox="0 0 11 11"><path d="M0.5 0.5 L10.5 10.5 M10.5 0.5 L0.5 10.5" stroke="#7a7a7a" stroke-width="1"/></svg>
<div class="t" style="left:10px;top:60.0px;">Файл</div>
<div class="t" style="left:55px;top:60.0px;">Правка</div>
<div class="t" style="left:110px;top:60.0px;">Вид</div>
<div class="t" style="left:150px;top:60.0px;">Сервис</div>
<div class="a" style="left:0px;top:78px;width:1920px;height:1px;background:#f0f0f0;"></div>
<div class="t" style="left:18px;top:100.0px;font-size:15px;line-height:20px;color:#1e3a92;">Настройка параметров компьютера</div>
<div class="a" style="left:0px;top:139px;width:1920px;height:1px;background:#dbe8f5;"></div>
<svg class="a" style="left:17px;top:168px;" width="17" height="16" viewBox="0 0 17 16"><circle cx="10.5" cy="6.5" r="5.5" fill="#2a8ad8"/><path d="M8 1.5 Q13 1 15.5 5 Q15 9 12 10Z" fill="#2aa84a"/><path d="M2 5 L7 2.5 L12 5 V13 L7 15.5 L2 13Z" fill="#c8d4ea" stroke="#7a8ab8" stroke-width="0.7"/><path d="M4 6 V12 M7 5 V13" stroke="#fff" stroke-width="1.5"/><rect x="3" y="4" width="2" height="2" fill="#e33"/></svg>
<div class="t" style="left:37px;top:168.0px;color:#0b700b;">Mail (Microsoft Outlook)</div>
<svg class="a" style="left:17px;top:193px;" width="17" height="16" viewBox="0 0 17 16"><rect x="0.5" y="4.5" width="12" height="11" fill="#f4f8fb" stroke="#9aa8b4" stroke-width="0.8"/><rect x="1" y="5" width="11" height="2" fill="#8ac8e0"/><path d="M2.5 9 H11 M2.5 11.5 H11 M2.5 14 H11" stroke="#3aa8c8" stroke-width="1" stroke-dasharray="1 1.2"/><circle cx="11.5" cy="4.5" r="4.2" fill="#f4f4f4" stroke="#8a9aa8" stroke-width="0.9"/><path d="M11.5 2 V4.8 H13.5" fill="none" stroke="#444" stroke-width="0.8"/></svg>
<div class="t" style="left:37px;top:193.0px;color:#0b700b;">Дата и время</div>
<svg class="a" style="left:17px;top:218px;" width="17" height="16" viewBox="0 0 17 16"><defs><linearGradient id="cpsp" x1="0" x2="1"><stop offset="0" stop-color="#555"/><stop offset="0.4" stop-color="#ddd"/><stop offset="1" stop-color="#777"/></linearGradient></defs><path d="M3 5.5 H6 L11 0.5 V15.5 L6 10.5 H3Z" fill="url(#cpsp)" stroke="#777" stroke-width="0.5"/></svg>
<div class="t" style="left:37px;top:218.0px;color:#0b700b;">Звук</div>
<svg class="a" style="left:17px;top:243px;" width="17" height="16" viewBox="0 0 17 16"><rect x="1.5" y="0.5" width="11" height="11" fill="#fff" stroke="#777" stroke-width="0.8"/><path d="M3.5 6 L6 8.5 L11 2.5" fill="none" stroke="#1a8ae8" stroke-width="1.6"/><rect x="9.5" y="0.5" width="2" height="1" fill="#e33"/><rect x="0.5" y="11" width="16" height="5" fill="#2a3a5a"/><path d="M8 13.5 H9.5 M11 13.5 H12.5 M14 13.5 H15.5" stroke="#aab" stroke-width="1.4"/></svg>
<div class="t" style="left:37px;top:243.0px;color:#0b700b;">Панель управления NVIDIA</div>
<svg class="a" style="left:17px;top:269px;" width="17" height="16" viewBox="0 0 17 16"><rect x="3" y="0" width="12" height="4" fill="#bbb"/><rect x="8" y="1" width="8" height="14" fill="#8ab88a"/><circle cx="14" cy="5" r="2.5" fill="#f5a030"/><rect x="0.5" y="4.5" width="11" height="11" fill="#111"/><circle cx="6" cy="10" r="4" fill="#d8d8d8"/><circle cx="6" cy="10" r="1.2" fill="#555"/></svg>
<div class="t" style="left:37px;top:269.0px;color:#0b700b;">Программы и компоненты</div>
<svg class="a" style="left:17px;top:294px;" width="17" height="16" viewBox="0 0 17 16"><path d="M2 10 Q1 4 4 1 Q4 5 6 6 Q5 9 6 12Z" fill="#3ad83a"/><path d="M8 12 Q7 6 10 1 L12 5 Q10 7 11 11Z" fill="#3ad83a"/><circle cx="12" cy="10" r="4" fill="#a8a8c8" stroke="#556" stroke-width="0.6"/><path d="M12 10 L15 8 L14 12Z" fill="#e07040"/><rect x="3" y="12" width="9" height="4" rx="1" fill="#eee" stroke="#666" stroke-width="0.8"/></svg>
<div class="t" style="left:37px;top:294.0px;color:#0b700b;">Резервное копирование и восстановление</div>
<svg class="a" style="left:17px;top:319px;" width="17" height="16" viewBox="0 0 17 16"><rect x="0.5" y="0.5" width="16" height="13" fill="#fff" stroke="#888" stroke-width="0.9"/><rect x="1" y="1" width="15" height="2" fill="#ddd"/><rect x="8" y="5" width="7" height="6" fill="#1a3ac8"/><rect x="8" y="11" width="7" height="1.5" fill="#aab"/><rect x="5" y="8" width="2" height="5" fill="#5a5"/><circle cx="6" cy="8" r="1.2" fill="#5d5"/></svg>
<div class="t" style="left:37px;top:319.0px;color:#0b700b;">Устранение неполадок</div>
<svg class="a" style="left:17px;top:344px;" width="17" height="16" viewBox="0 0 17 16"><circle cx="8" cy="8" r="7.5" fill="#eee" stroke="#888" stroke-width="1"/><circle cx="8" cy="8" r="6" fill="#2a5ad8"/><path d="M8 3.5 V8 L5 6.5 M8 8 L11 10 M4 10 Q8 13.5 12 10.5" fill="none" stroke="#fff" stroke-width="1.3"/></svg>
<div class="t" style="left:37px;top:344.0px;color:#0b700b;">Центр синхронизации</div>
<div class="t" style="left:851.5px;top:168.0px;color:#0b700b;">отн</div>
<div class="t" style="left:851.5px;top:193.0px;color:#0b700b;">ост</div>
<div class="t" style="left:851.5px;top:243.0px;color:#0b700b;">одн</div>
<div class="t" style="left:851.5px;top:268.0px;color:#0b700b;">ачи</div>
<div class="t" style="left:851.5px;top:318.0px;color:#0b700b;">оти</div>
<div class="a" style="left:870px;top:0px;width:986px;height:708px;background:#fff;border:1px solid #9a9a9a;box-shadow:0 0 10px rgba(0,0,0,0.25);"></div>
<svg class="a" style="left:879px;top:7px;" width="17" height="16" viewBox="0 0 17 16"><defs><linearGradient id="cmg" x1="0" y1="0" x2="1" y2="1"><stop offset="0" stop-color="#0a1a9a"/><stop offset="0.6" stop-color="#2a4ae8"/><stop offset="1" stop-color="#a8c0ff"/></linearGradient></defs><rect x="3.5" y="0.5" width="12.5" height="10" fill="#d8d8d8" stroke="#888" stroke-width="0.8"/><rect x="5" y="2" width="9.5" height="7" fill="url(#cmg)"/><path d="M1.5 8 V5.5" stroke="#5c5" stroke-width="1.5"/><path d="M1 10 Q3 8.5 5 10" fill="none" stroke="#222" stroke-width="1"/><rect x="0.5" y="10.5" width="11.5" height="5" fill="#9aa0a4" stroke="#6a6e70" stroke-width="0.8"/><path d="M2 13 H10.5" stroke="#e8e8e8" stroke-width="1" stroke-dasharray="1.2 0.8"/></svg>
<div class="t" style="left:900px;top:8.0px;">Управление компьютером</div>
<div class="a" style="left:1736px;top:15px;width:10px;height:1px;background:#000;"></div>
<div class="a" style="left:1781px;top:10px;width:10px;height:10px;border:1px solid #000;"></div>
<svg class="a" style="left:1827px;top:10px;" width="10" height="10" viewBox="0 0 10 10"><path d="M0 0 L10 10 M10 0 L0 10" stroke="#000" stroke-width="1"/></svg>
<div class="t" style="left:881px;top:34.0px;">Файл</div>
<div class="t" style="left:926px;top:34.0px;">Действие</div>
<div class="t" style="left:993px;top:34.0px;">Вид</div>
<div class="t" style="left:1029px;top:34.0px;">Справка</div>
<div class="a" style="left:871px;top:53px;width:984px;height:1px;background:#c4c4c4;"></div>
<svg class="a" style="left:876px;top:59px;" width="16" height="15" viewBox="0 0 16 15"><defs><linearGradient id="abg" x1="0" y1="0" x2="0" y2="1"><stop offset="0" stop-color="#8ad0ff"/><stop offset="1" stop-color="#1a80d8"/></linearGradient></defs><path d="M0.8 7.3 L7.5 0.8 V4.5 H15.5 V10.3 H7.5 V14 Z" fill="url(#abg)" stroke="#2a7ac8" stroke-width="0.9" stroke-linejoin="round"/></svg>
<svg class="a" style="left:899px;top:59px;" width="16" height="15" viewBox="0 0 16 15"><defs><linearGradient id="afg" x1="0" y1="0" x2="0" y2="1"><stop offset="0" stop-color="#c0c0c0"/><stop offset="1" stop-color="#6a6a6a"/></linearGradient></defs><path d="M15.2 7.3 L8.5 0.8 V4.5 H0.5 V10.3 H8.5 V14 Z" fill="url(#afg)" stroke="#6a6a6a" stroke-width="0.9" stroke-linejoin="round"/></svg>
<div class="a" style="left:921px;top:57px;width:1px;height:18px;background:#c8c8c8;"></div>
<svg class="a" style="left:931px;top:60px;" width="14" height="14" viewBox="0 0 14 14"><path d="M0.5 4.5 H5 L6 3 H13.5 V13.5 H0.5Z" fill="#f6d27a" stroke="#c49a3a" stroke-width="0.8"/><rect x="0.5" y="6" width="13" height="7.5" fill="#fbe3a0" stroke="#c49a3a" stroke-width="0.8"/><path d="M2 9 Q3 4 7.5 3.5 L6.8 1 L11 3.8 L7.5 6.8 L7.6 5 Q4.5 5.5 2 9Z" fill="#2fb53a" stroke="#1a8a2a" stroke-width="0.5"/></svg>
<div class="a" style="left:950px;top:55px;width:23px;height:21px;background:#cce4f7;border:1px solid #99c9ef;"></div>
<svg class="a" style="left:954px;top:61px;" width="17" height="14" viewBox="0 0 17 14"><rect x="0.5" y="0.5" width="16" height="13" fill="#fafafa" stroke="#7a7a7a" stroke-width="1"/><path d="M1 3.5 H16" stroke="#7a7a7a" stroke-width="1"/><rect x="11" y="1.3" width="1.6" height="1.4" fill="#999"/><rect x="13.6" y="1.3" width="1.6" height="1.4" fill="#999"/><path d="M5.5 3.5 V13" stroke="#7a7a7a" stroke-width="1"/><path d="M2 6 H4 M2 8.5 H4 M2 11 H4" stroke="#2a70c8" stroke-width="1"/><path d="M12 5.5 L8.5 8.3 L12 11Z" fill="#2db84a"/></svg>
<div class="a" style="left:975px;top:57px;width:1px;height:18px;background:#c8c8c8;"></div>
<svg class="a" style="left:985px;top:58px;" width="14" height="17" viewBox="0 0 14 17"><defs><linearGradient id="hlpg" x1="0" x2="1"><stop offset="0" stop-color="#2a3ea8"/><stop offset="0.3" stop-color="#3a5ad0"/><stop offset="1" stop-color="#2a48b8"/></linearGradient></defs><rect x="0.5" y="0.5" width="12.5" height="15.5" fill="url(#hlpg)" stroke="#1a2a80" stroke-width="1"/><path d="M4.2 5 Q4.2 2.5 6.8 2.5 Q9.4 2.5 9.4 5 Q9.4 6.6 7.6 7.6 Q6.8 8.1 6.8 10" fill="none" stroke="#fff" stroke-width="1.6"/><rect x="6" y="11.5" width="1.7" height="1.8" fill="#fff"/></svg>
<div class="a" style="left:1004px;top:55px;width:23px;height:21px;background:#cce4f7;border:1px solid #99c9ef;"></div>
<svg class="a" style="left:1008px;top:61px;" width="17" height="14" viewBox="0 0 17 14"><rect x="0.5" y="0.5" width="16" height="13" fill="#fafafa" stroke="#7a7a7a" stroke-width="1"/><path d="M1 3.5 H16" stroke="#7a7a7a" stroke-width="1"/><rect x="11" y="1.3" width="1.6" height="1.4" fill="#999"/><rect x="13.6" y="1.3" width="1.6" height="1.4" fill="#999"/><path d="M11.5 3.5 V13" stroke="#7a7a7a" stroke-width="1"/><path d="M13 6 H15 M13 8.5 H15 M13 11 H15" stroke="#2a70c8" stroke-width="1"/><path d="M5 5.5 L8.5 8.3 L5 11Z" fill="#2db84a"/></svg>
<div class="a" style="left:1029px;top:57px;width:1px;height:18px;background:#c8c8c8;"></div>
<svg class="a" style="left:1038px;top:60px;" width="16" height="14" viewBox="0 0 16 14"><rect x="3" y="1" width="12" height="6" fill="#b8c8c8" stroke="#777" stroke-width="0.6"/><rect x="10" y="3" width="3" height="2" fill="#3c3"/><circle cx="6" cy="7" r="2.5" fill="#cde" stroke="#777" stroke-width="0.6"/><path d="M4 9 L0.5 13" stroke="#888" stroke-width="1.4"/></svg>
<svg class="a" style="left:1062px;top:59px;" width="15" height="15" viewBox="0 0 15 15"><path d="M1.5 1.5 L13.5 13.5 M13.5 1.5 L1.5 13.5" stroke="#d11" stroke-width="3.2"/></svg>
<svg class="a" style="left:1086px;top:58px;" width="12" height="16" viewBox="0 0 12 16"><path d="M0.5 0.5 H8 L11.5 4 V15.5 H0.5Z" fill="#fff" stroke="#999" stroke-width="0.8"/><path d="M3 9 L5 11 L9 6" fill="none" stroke="#e05a1a" stroke-width="1.2"/></svg>
<svg class="a" style="left:1109px;top:58px;" width="13" height="16" viewBox="0 0 13 16"><rect x="0" y="0" width="12" height="16" fill="#f5d06a" stroke="#c9a030" stroke-width="0.6"/><path d="M9 15 V10 H7 L10 6 L13 10 H11 V15Z" fill="#3a3"/></svg>
<svg class="a" style="left:1132px;top:58px;" width="14" height="16" viewBox="0 0 14 16"><rect x="0" y="0" width="12" height="16" fill="#f5d06a" stroke="#c9a030" stroke-width="0.6"/><circle cx="9" cy="9" r="3" fill="#cde" stroke="#778" stroke-width="0.8"/><path d="M7 11 L3 15" stroke="#667" stroke-width="1.2"/></svg>
<svg class="a" style="left:1153px;top:60px;" width="16" height="12" viewBox="0 0 16 12"><rect x="0.5" y="0.5" width="15" height="11" fill="#fff" stroke="#666" stroke-width="0.9"/><path d="M3 4 L4 5 L6 2.5 M3 8 L4 9 L6 6.5" fill="none" stroke="#2a7ae0" stroke-width="0.9"/><rect x="7.5" y="3.5" width="6" height="1" fill="#888"/><rect x="7.5" y="7.5" width="6" height="1" fill="#888"/></svg>
<div class="a" style="left:871px;top:76px;width:984px;height:7px;background:#f0f0f0;"></div>
<div class="a" style="left:871px;top:83px;width:191px;height:608px;background:#fff;border-top:2px solid #828790;border-left:1px solid #828790;"></div>
<div class="a" style="left:1061px;top:83px;width:4px;height:608px;background:#f0f0f0;"></div>
<div class="a" style="left:1065px;top:83px;width:596px;height:308px;background:#fff;border-top:2px solid #828790;border-left:1px solid #828790;"></div>
<div class="a" style="left:872px;top:85px;width:189px;height:605px;overflow:hidden"><div class="a" style="left:-872px;top:-85px;width:1920px;height:1080px">
<svg class="a" style="left:876px;top:86px;" width="17" height="16" viewBox="0 0 17 16"><defs><linearGradient id="cmg" x1="0" y1="0" x2="1" y2="1"><stop offset="0" stop-color="#0a1a9a"/><stop offset="0.6" stop-color="#2a4ae8"/><stop offset="1" stop-color="#a8c0ff"/></linearGradient></defs><rect x="3.5" y="0.5" width="12.5" height="10" fill="#d8d8d8" stroke="#888" stroke-width="0.8"/><rect x="5" y="2" width="9.5" height="7" fill="url(#cmg)"/><path d="M1.5 8 V5.5" stroke="#5c5" stroke-width="1.5"/><path d="M1 10 Q3 8.5 5 10" fill="none" stroke="#222" stroke-width="1"/><rect x="0.5" y="10.5" width="11.5" height="5" fill="#9aa0a4" stroke="#6a6e70" stroke-width="0.8"/><path d="M2 13 H10.5" stroke="#e8e8e8" stroke-width="1" stroke-dasharray="1.2 0.8"/></svg>
<div class="t" style="left:897px;top:86.0px;">Управление компьютером (локальным)</div>
<svg class="a" style="left:879px;top:109.5px;" width="8" height="5" viewBox="0 0 8 5"><path d="M0.8 0.8 L4 4.2 L7.2 0.8" fill="none" stroke="#404040" stroke-width="1.3"/></svg>
<svg class="a" style="left:896px;top:104px;" width="13" height="16" viewBox="0 0 13 16"><path d="M1.5 0.5 V3.5 L3 5 L4.5 3.5 V0.5 M3 5 V15" fill="none" stroke="#8a8a8a" stroke-width="1.1"/><path d="M2.3 5.5 V14.5 H3.7 V5.5" fill="#e8e8e8" stroke="#7a7a7a" stroke-width="0.6"/><rect x="7.6" y="0.5" width="1.8" height="7.5" fill="#9a9a9a" stroke="#666" stroke-width="0.5"/><rect x="6.5" y="8" width="4" height="7.5" rx="1" fill="#f2b318" stroke="#b07a00" stroke-width="0.6"/></svg>
<div class="t" style="left:916px;top:104.0px;">Служебные программы</div>
<svg class="a" style="left:899px;top:126px;" width="5" height="8" viewBox="0 0 5 8"><path d="M0.8 0.8 L4.2 4 L0.8 7.2" fill="none" stroke="#a0a0a0" stroke-width="1.3"/></svg>
<svg class="a" style="left:914px;top:122px;" width="16" height="16" viewBox="0 0 16 16"><circle cx="8" cy="8" r="7.3" fill="#f4f0e0" stroke="#888" stroke-width="1.2"/><path d="M8 3 V8 H12" stroke="#444" stroke-width="1.2" fill="none"/></svg>
<div class="t" style="left:935px;top:122.0px;">Планировщик задач</div>
<svg class="a" style="left:899px;top:144px;" width="5" height="8" viewBox="0 0 5 8"><path d="M0.8 0.8 L4.2 4 L0.8 7.2" fill="none" stroke="#a0a0a0" stroke-width="1.3"/></svg>
<svg class="a" style="left:915px;top:140px;" width="13" height="16" viewBox="0 0 13 16"><rect x="1" y="0.5" width="11.5" height="15" fill="#dfe6f0" stroke="#3a5a9a"/><path d="M6.5 2 L10 8 H3Z" fill="#f5c400"/><circle cx="8" cy="12" r="2.5" fill="#d33"/></svg>
<div class="t" style="left:935px;top:140.0px;">Просмотр событий</div>
<svg class="a" style="left:899px;top:162px;" width="5" height="8" viewBox="0 0 5 8"><path d="M0.8 0.8 L4.2 4 L0.8 7.2" fill="none" stroke="#a0a0a0" stroke-width="1.3"/></svg>
<svg class="a" style="left:914px;top:158px;" width="16" height="16" viewBox="0 0 16 16"><rect x="0.5" y="3" width="15" height="12" fill="#f5d879" stroke="#c9a030" stroke-width="0.8"/><circle cx="4" cy="13" r="2.5" fill="#3a3"/><text x="8" y="12" font-size="7" fill="#333" font-family="Liberation Sans">22</text></svg>
<div class="t" style="left:935px;top:158.0px;">Общие папки</div>
<svg class="a" style="left:899px;top:180px;" width="5" height="8" viewBox="0 0 5 8"><path d="M0.8 0.8 L4.2 4 L0.8 7.2" fill="none" stroke="#a0a0a0" stroke-width="1.3"/></svg>
<svg class="a" style="left:914px;top:176px;" width="16" height="16" viewBox="0 0 16 16"><circle cx="5" cy="5" r="3" fill="#e7b58a"/><path d="M0 15 Q5 7 10 15Z" fill="#3a7a3a"/><rect x="7" y="1" width="9" height="7" fill="#2a5ac0"/><circle cx="11" cy="9" r="3" fill="#e7b58a"/><path d="M6 16 Q11 9 16 16Z" fill="#6a8ad0"/></svg>
<div class="t" style="left:935px;top:176.0px;">Локальные пользователи и группы</div>
<svg class="a" style="left:899px;top:198px;" width="5" height="8" viewBox="0 0 5 8"><path d="M0.8 0.8 L4.2 4 L0.8 7.2" fill="none" stroke="#a0a0a0" stroke-width="1.3"/></svg>
<svg class="a" style="left:914px;top:194px;" width="16" height="16" viewBox="0 0 16 16"><circle cx="8" cy="8" r="7.3" fill="#f4f0e0" stroke="#666" stroke-width="1.2"/><path d="M4 4 L12 12" stroke="#c22" stroke-width="1.6"/><circle cx="8" cy="8" r="4.5" fill="none" stroke="#c22" stroke-width="1"/></svg>
<div class="t" style="left:935px;top:194.0px;">Производительность</div>
<svg class="a" style="left:915px;top:212px;" width="14" height="15" viewBox="0 0 14 15"><rect x="5" y="0" width="4" height="7" fill="#3a3a3a"/><rect x="6.2" y="1.2" width="1.6" height="1.6" fill="#5ee05e"/><rect x="0.5" y="7.5" width="13" height="7" fill="#e8e8e8" stroke="#888"/><rect x="2" y="10" width="2" height="2.5" fill="#333"/><rect x="10" y="10" width="2" height="2.5" fill="#333"/></svg>
<div class="t" style="left:935px;top:212.0px;">Диспетчер устройств</div>
<svg class="a" style="left:879px;top:235.5px;" width="8" height="5" viewBox="0 0 8 5"><path d="M0.8 0.8 L4 4.2 L7.2 0.8" fill="none" stroke="#404040" stroke-width="1.3"/></svg>
<svg class="a" style="left:896px;top:230px;" width="18" height="16" viewBox="0 0 18 16"><rect x="0.5" y="6" width="15" height="9" fill="#dadada" stroke="#777" stroke-width="0.8"/><rect x="4" y="0.5" width="13" height="8" fill="#5a9ae0" stroke="#567" stroke-width="0.8"/><rect x="8" y="2.5" width="6" height="1.5" fill="#fff"/></svg>
<div class="t" style="left:916px;top:230.0px;">Запоминающие устройства</div>
<div class="a" style="left:912px;top:247px;width:143px;height:17px;background:#d9d9d9;"></div>
<svg class="a" style="left:914px;top:251px;" width="16" height="10" viewBox="0 0 16 10"><rect x="0.5" y="3" width="15" height="6.5" fill="#3c3c3c"/><path d="M2 3 L3 0.5 H13 L14 3" fill="#ccc" stroke="#888" stroke-width="0.6"/><rect x="3" y="5" width="1.5" height="2.5" fill="#fff"/><rect x="11" y="5" width="2" height="1.5" fill="#4c4"/></svg>
<div class="t" style="left:935px;top:248.0px;">Управление дисками</div>
<svg class="a" style="left:882px;top:270px;" width="5" height="8" viewBox="0 0 5 8"><path d="M0.8 0.8 L4.2 4 L0.8 7.2" fill="none" stroke="#a0a0a0" stroke-width="1.3"/></svg>
<svg class="a" style="left:898px;top:266px;" width="14" height="16" viewBox="0 0 14 16"><rect x="0.5" y="0.5" width="9" height="15" fill="#e4e4e4" stroke="#777" stroke-width="0.8"/><rect x="2" y="3" width="6" height="1.2" fill="#666"/><rect x="2" y="6" width="6" height="1.2" fill="#666"/><circle cx="10" cy="12" r="3.5" fill="#7ab0d8" stroke="#456" stroke-width="0.7"/></svg>
<div class="t" style="left:916px;top:266.0px;">Службы и приложения</div>
</div></div>
<div class="a" style="left:1066px;top:85px;width:594px;height:20px;background:#f0f0f0;border-bottom:2px solid #a8a8a8;"></div>
<div class="a" style="left:1066px;top:85px;width:26px;height:18px;background:#f0f0f0;border-right:2px solid #b4b4b4;"></div>
<div class="a" style="left:1092px;top:85px;width:95px;height:18px;background:#f0f0f0;border-left:1px solid #fff;border-right:2px solid #b4b4b4;"></div>
<div class="t" style="left:1099px;top:86.5px;">Расположение</div>
<div class="a" style="left:1187px;top:85px;width:59px;height:18px;background:#f0f0f0;border-left:1px solid #fff;border-right:2px solid #b4b4b4;"></div>
<div class="t" style="left:1194px;top:86.5px;">Тип</div>
<div class="a" style="left:1246px;top:85px;width:114px;height:18px;background:#f0f0f0;border-left:1px solid #fff;border-right:2px solid #b4b4b4;"></div>
<div class="t" style="left:1253px;top:86.5px;">Файловая система</div>
<div class="a" style="left:1360px;top:85px;width:400px;height:18px;background:#f0f0f0;border-left:1px solid #fff;border-right:2px solid #b4b4b4;"></div>
<div class="t" style="left:1367px;top:86.5px;">Состояние</div>
<div class="a" style="left:1066px;top:104px;width:594px;height:60px;overflow:hidden">
<div class="t" style="left:0px;top:1.0px;"></div>
<div class="t" style="left:33px;top:1.0px;">Простой</div>
<div class="t" style="left:127px;top:1.0px;">Базовый</div>
<div class="t" style="left:186px;top:1.0px;letter-spacing:-0.3px;">NTFS</div>
<div class="t" style="left:300px;top:1.0px;">Исправен (Загрузка, Файл подкачки, Аварийный дамп памяти, Основной раздел)</div>
<div class="t" style="left:0px;top:18.0px;">ел 1)</div>
<div class="t" style="left:33px;top:18.0px;">Простой</div>
<div class="t" style="left:127px;top:18.0px;">Базовый</div>
<div class="t" style="left:186px;top:18.0px;letter-spacing:-0.3px;"></div>
<div class="t" style="left:300px;top:18.0px;">Исправен (Шифрованный (EFI) системный раздел)</div>
<div class="t" style="left:0px;top:35.0px;">ел 4)</div>
<div class="t" style="left:33px;top:35.0px;">Простой</div>
<div class="t" style="left:127px;top:35.0px;">Базовый</div>
<div class="t" style="left:186px;top:35.0px;letter-spacing:-0.3px;"></div>
<div class="t" style="left:300px;top:35.0px;">Исправен (Раздел восстановления)</div>
</div>
<div class="a" style="left:1066px;top:367px;width:594px;height:17px;background:#f0f0f0;"></div>
<div class="a" style="left:1132px;top:369px;width:430px;height:13px;background:#cdcdcd;"></div>
<svg class="a" style="left:1073px;top:371px;" width="5" height="8" viewBox="0 0 5 8"><path d="M4.2 0.8 L1 4 L4.2 7.2" fill="none" stroke="#606060" stroke-width="1.5"/></svg>
<svg class="a" style="left:1649px;top:371px;" width="5" height="8" viewBox="0 0 5 8"><path d="M0.8 0.8 L4 4 L0.8 7.2" fill="none" stroke="#606060" stroke-width="1.5"/></svg>
<div class="a" style="left:1065px;top:384px;width:596px;height:6px;background:#f0f0f0;border-bottom:1px solid #e8e8e8;"></div>
<div class="a" style="left:1065px;top:389px;width:596px;height:302px;background:#f0f0f0;border-top:2px solid #828790;border-left:1px solid #828790;"></div>
<div class="a" style="left:1066px;top:391px;width:578px;height:271px;overflow:hidden"><div class="a" style="left:-1066px;top:-391px;width:1920px;height:1080px">
<div class="a" style="left:1066px;top:392px;width:102px;height:98px;background:#f0f0f0;border-right:1px solid #d0d0d0;border-bottom:1px solid #c0c0c0;"></div>
<svg class="a" style="left:1077px;top:405px;" width="14" height="8" viewBox="0 0 14 8"><path d="M1.5 2.5 Q2 0.5 4 0.5 H10 Q12 0.5 12.5 2.5 L13.5 4 H0.5Z" fill="#d8d8d8" stroke="#9a9a9a" stroke-width="0.8"/><rect x="0.5" y="4" width="13" height="3.5" fill="#3c3c3c"/><rect x="10" y="5" width="2" height="1.5" fill="#46d046"/></svg>
<div class="t" style="left:1093px;top:404.0px;font-weight:bold;">Диск 0</div>
<div class="t" style="left:1075px;top:419.0px;">Базовый</div>
<div class="t" style="left:1075px;top:434.0px;letter-spacing:-0.4px;">465,75 ГБ</div>
<div class="t" style="left:1075px;top:449.0px;">В сети</div>
<div class="a" style="left:1170px;top:392px;width:474px;height:98px;background:#fff;border-bottom:1px solid #c0c0c0;"></div>
<div class="a" style="left:1171px;top:402px;width:87px;height:13px;background:#000080;"></div>
<div class="a" style="left:1261px;top:402px;width:262px;height:13px;background:#000080;"></div>
<div class="a" style="left:1526px;top:402px;width:115px;height:13px;background:#000080;"></div>
<div class="a" style="left:1171px;top:415px;width:88px;height:74px;background:#fff;border:1px solid #c8c8c8;border-left:3px solid #c8c8c8;"></div>
<div class="a" style="left:1174px;top:416px;width:84px;height:72px;overflow:hidden"><div class="a" style="left:-1174px;top:-416px;width:1920px;height:1080px">
<div class="t" style="left:1178px;top:436.0px;">100 МБ</div>
<div class="t" style="left:1178px;top:451.0px;">Исправен (Шифрованный</div>
</div></div>
<div class="a" style="left:1526px;top:415px;width:115px;height:74px;background:#fff;border:1px solid #c8c8c8;"></div>
<div class="a" style="left:1527px;top:416px;width:113px;height:72px;overflow:hidden"><div class="a" style="left:-1527px;top:-416px;width:1920px;height:1080px">
<div class="t" style="left:1527px;top:451.0px;">Исправен (Раздел восстановления)</div>
</div></div>
<div class="a" style="left:1261px;top:415px;width:262px;height:75px;border:3px solid #c0c0c0;background:repeating-linear-gradient(135deg,#fff 0,#fff 5px,#a8a8a8 5px,#a8a8a8 6px)"></div>
<div class="a" style="left:1264px;top:418px;width:256px;height:69px;overflow:hidden"><div class="a" style="left:-1264px;top:-418px;width:1920px;height:1080px">
<div class="t" style="left:1274px;top:420.0px;font-weight:bold;">(C:)</div>
<div class="t" style="left:1268px;top:436.0px;letter-spacing:-0.3px;">465,14 ГБ NTFS</div>
<div class="t" style="left:1268px;top:451.0px;">Исправен (Загрузка, Файл подкачки, Аварийный дамп памяти, Основной раздел)</div>
</div></div>
<div class="a" style="left:1066px;top:490px;width:578px;height:100px;background:#f0f0f0;border-bottom:1px solid #a0a0a0;"></div>
<div class="a" style="left:1168px;top:490px;width:1px;height:100px;background:#d0d0d0;"></div>
<svg class="a" style="left:1077px;top:505px;" width="14" height="8" viewBox="0 0 14 8"><path d="M1.5 2.5 Q2 0.5 4 0.5 H10 Q12 0.5 12.5 2.5 L13.5 4 H0.5Z" fill="#d8d8d8" stroke="#9a9a9a" stroke-width="0.8"/><rect x="0.5" y="4" width="13" height="3.5" fill="#3c3c3c"/><rect x="10" y="5" width="2" height="1.5" fill="#46d046"/></svg>
<div class="t" style="left:1093px;top:503.0px;font-weight:bold;">Диск 1</div>
<div class="a" style="left:1066px;top:491px;width:101px;height:99px;overflow:hidden"><div class="a" style="left:-1066px;top:-491px;width:1920px;height:1080px">
<div class="t" style="left:1075px;top:517.0px;">Съемное устройство</div>
<div class="t" style="left:1075px;top:547.0px;">Нет носителя</div>
</div></div>
<div class="a" style="left:1066px;top:592px;width:578px;height:70px;background:#f0f0f0;"></div>
<div class="a" style="left:1168px;top:592px;width:1px;height:70px;background:#d0d0d0;"></div>
</div></div>
<div class="a" style="left:1644px;top:392px;width:16px;height:270px;background:#f0f0f0;"></div>
<div class="a" style="left:1646px;top:408px;width:12px;height:102px;background:#cdcdcd;"></div>
<svg class="a" style="left:1648px;top:397px;" width="8" height="5" viewBox="0 0 8 5"><path d="M0.8 4.2 L4 1 L7.2 4.2" fill="none" stroke="#606060" stroke-width="1.5"/></svg>
<svg class="a" style="left:1648px;top:651px;" width="8" height="5" viewBox="0 0 8 5"><path d="M0.8 0.8 L4 4 L7.2 0.8" fill="none" stroke="#606060" stroke-width="1.5"/></svg>
<div class="a" style="left:1066px;top:662px;width:594px;height:20px;background:#f0f0f0;border-top:1px solid #e0e0e0;border-bottom:1px solid #a0a0a0;"></div>
<div class="a" style="left:1665px;top:83px;width:189px;height:600px;background:#fff;border-top:2px solid #828790;border-left:2px solid #828790;"></div>
<div class="a" style="left:1667px;top:85px;width:186px;height:20px;background:#f0f0f0;border-bottom:1px solid #a0a0a0;"></div>
<div class="t" style="left:1672px;top:87.0px;font-weight:bold;">Действия</div>
<div class="a" style="left:1667px;top:107px;width:186px;height:25px;background:linear-gradient(#bcd3ec,#a3bddb);"></div>
<div class="t" style="left:1674px;top:111.0px;">Управление дисками</div>
<svg class="a" style="left:1836px;top:115px;" width="10" height="6" viewBox="0 0 10 6"><path d="M0 6 L5 0 L10 6Z" fill="#000"/></svg>
<div class="t" style="left:1698px;top:135.5px;">Дополнительные дей...</div>
<svg class="a" style="left:1840px;top:139px;" width="5" height="9" viewBox="0 0 5 9"><path d="M0 0 L5 4.5 L0 9Z" fill="#000"/></svg>
<div class="a" style="left:871px;top:683px;width:984px;height:24px;background:#f0f0f0;border-top:1px solid #d8d8d8;"></div>
<div class="a" style="left:1634px;top:686px;width:1px;height:19px;background:#d0d0d0;"></div>
<div class="a" style="left:1767px;top:686px;width:1px;height:19px;background:#d0d0d0;"></div>
<div class="a" style="left:1852px;top:686px;width:1px;height:19px;background:#d0d0d0;"></div>
<div class="a" style="left:79px;top:42px;width:780px;height:571px;background:#fff;border:1px solid #9a9a9a;box-shadow:0 0 12px rgba(0,0,0,0.28);"></div>
<svg class="a" style="left:88px;top:50px;" width="14" height="15" viewBox="0 0 14 15"><rect x="5" y="0" width="4" height="7" fill="#3a3a3a"/><rect x="6.2" y="1.2" width="1.6" height="1.6" fill="#5ee05e"/><rect x="0.5" y="7.5" width="13" height="7" fill="#e8e8e8" stroke="#888"/><rect x="2" y="10" width="2" height="2.5" fill="#333"/><rect x="10" y="10" width="2" height="2.5" fill="#333"/></svg>
<div class="t" style="left:108px;top:50.0px;color:#999;">Диспетчер устройств</div>
<div class="a" style="left:739px;top:57px;width:10px;height:1px;background:#999;"></div>
<div class="a" style="left:784px;top:52px;width:10px;height:10px;border:1px solid #999;"></div>
<svg class="a" style="left:830px;top:52px;" width="10" height="10" viewBox="0 0 10 10"><path d="M0 0 L10 10 M10 0 L0 10" stroke="#999" stroke-width="1"/></svg>
<div class="t" style="left:89px;top:76.0px;">Файл</div>
<div class="t" style="left:134px;top:76.0px;">Действие</div>
<div class="t" style="left:201px;top:76.0px;">Вид</div>
<div class="t" style="left:237px;top:76.0px;">Справка</div>
<div class="a" style="left:80px;top:95px;width:778px;height:1px;background:#c4c4c4;"></div>
<svg class="a" style="left:84px;top:101px;" width="16" height="15" viewBox="0 0 16 15"><path d="M0.8 7.3 L7.5 0.8 V4.5 H15.5 V10.3 H7.5 V14 Z" fill="url(#afg)" stroke="#6a6a6a" stroke-width="0.9" stroke-linejoin="round"/><defs><linearGradient id="afg" x1="0" y1="0" x2="0" y2="1"><stop offset="0" stop-color="#c0c0c0"/><stop offset="1" stop-color="#6a6a6a"/></linearGradient></defs></svg>
<svg class="a" style="left:107px;top:101px;" width="16" height="15" viewBox="0 0 16 15"><defs><linearGradient id="afg" x1="0" y1="0" x2="0" y2="1"><stop offset="0" stop-color="#c0c0c0"/><stop offset="1" stop-color="#6a6a6a"/></linearGradient></defs><path d="M15.2 7.3 L8.5 0.8 V4.5 H0.5 V10.3 H8.5 V14 Z" fill="url(#afg)" stroke="#6a6a6a" stroke-width="0.9" stroke-linejoin="round"/></svg>
<div class="a" style="left:129px;top:99px;width:1px;height:19px;background:#c8c8c8;"></div>
<svg class="a" style="left:137px;top:103px;" width="17" height="14" viewBox="0 0 17 14"><rect x="0.5" y="0.5" width="16" height="13" fill="#fafafa" stroke="#7a7a7a" stroke-width="1"/><path d="M1 3.5 H16" stroke="#7a7a7a" stroke-width="1"/><rect x="11" y="1.3" width="1.6" height="1.4" fill="#999"/><rect x="13.6" y="1.3" width="1.6" height="1.4" fill="#999"/><path d="M5.5 3.5 V13" stroke="#7a7a7a" stroke-width="1"/><path d="M2 6 H4 M2 8.5 H4 M2 11 H4" stroke="#2a70c8" stroke-width="1"/><path d="M12 5.5 L8.5 8.3 L12 11Z" fill="#2db84a"/></svg>
<div class="a" style="left:160px;top:99px;width:1px;height:19px;background:#c8c8c8;"></div>
<svg class="a" style="left:169px;top:101px;" width="15" height="16" viewBox="0 0 15 16"><rect x="0.5" y="0.5" width="14" height="15" fill="#f4f4f4" stroke="#888" stroke-width="0.8"/><rect x="2.5" y="3" width="10" height="1" fill="#888"/><rect x="2.5" y="6" width="10" height="1" fill="#888"/><rect x="2.5" y="9" width="10" height="1" fill="#888"/><rect x="2.5" y="12" width="10" height="1.5" fill="#3a8"/></svg>
<div class="a" style="left:191px;top:99px;width:1px;height:19px;background:#c8c8c8;"></div>
<svg class="a" style="left:201px;top:101px;" width="13" height="16" viewBox="0 0 13 16"><defs><linearGradient id="hlpg" x1="0" x2="1"><stop offset="0" stop-color="#2a3ea8"/><stop offset="0.3" stop-color="#3a5ad0"/><stop offset="1" stop-color="#2a48b8"/></linearGradient></defs><rect x="0.5" y="0.5" width="12.5" height="15.5" fill="url(#hlpg)" stroke="#1a2a80" stroke-width="1"/><path d="M4.2 5 Q4.2 2.5 6.8 2.5 Q9.4 2.5 9.4 5 Q9.4 6.6 7.6 7.6 Q6.8 8.1 6.8 10" fill="none" stroke="#fff" stroke-width="1.6"/><rect x="6" y="11.5" width="1.7" height="1.8" fill="#fff"/></svg>
<svg class="a" style="left:223px;top:103px;" width="17" height="14" viewBox="0 0 17 14"><rect x="0.5" y="0.5" width="16" height="13" fill="#fafafa" stroke="#7a7a7a" stroke-width="1"/><path d="M1 3.5 H16" stroke="#7a7a7a" stroke-width="1"/><rect x="11" y="1.3" width="1.6" height="1.4" fill="#999"/><rect x="13.6" y="1.3" width="1.6" height="1.4" fill="#999"/><path d="M11.5 3.5 V13" stroke="#7a7a7a" stroke-width="1"/><path d="M13 6 H15 M13 8.5 H15 M13 11 H15" stroke="#2a70c8" stroke-width="1"/><path d="M5 5.5 L8.5 8.3 L5 11Z" fill="#2db84a"/></svg>
<div class="a" style="left:245px;top:99px;width:1px;height:19px;background:#c8c8c8;"></div>
<svg class="a" style="left:254px;top:101px;" width="17" height="15" viewBox="0 0 17 15"><rect x="0.5" y="0.5" width="16" height="10.5" fill="#68c0f0" stroke="#2a88c8" stroke-width="0.8"/><circle cx="10.5" cy="6" r="4.3" fill="#c8eafc" stroke="#3a90c8" stroke-width="1"/><path d="M7.3 9.5 L2.5 14" stroke="#556" stroke-width="1.5"/><rect x="5" y="12.5" width="12" height="1.5" fill="#8a8a8a"/></svg>
<div class="a" style="left:277px;top:99px;width:1px;height:19px;background:#c8c8c8;"></div>
<svg class="a" style="left:288px;top:101px;" width="14" height="16" viewBox="0 0 14 16"><rect x="1" y="0" width="6" height="13" fill="#2a2a2a"/><rect x="2.5" y="2" width="2" height="2" fill="#5d5"/><rect x="0" y="13" width="9" height="2" fill="#555"/><path d="M10 6 L14 10 H12 V15 H8 V10 H6Z" fill="#2db84a"/></svg>
<svg class="a" style="left:309px;top:101px;" width="15" height="15" viewBox="0 0 15 15"><path d="M1.5 1.5 L13.5 13.5 M13.5 1.5 L1.5 13.5" stroke="#d11" stroke-width="3.2"/></svg>
<svg class="a" style="left:331px;top:101px;" width="16" height="16" viewBox="0 0 16 16"><circle cx="8" cy="8" r="7.4" fill="#fff" stroke="#444" stroke-width="1.1"/><path d="M6.5 3.5 H9.5 V8 H12 L8 12.5 L4 8 H6.5Z" fill="#000"/></svg>
<div class="a" style="left:80px;top:118px;width:778px;height:7px;background:#f0f0f0;"></div>
<div class="a" style="left:80px;top:125px;width:778px;height:462px;background:#fff;border-top:2px solid #6a6a6a;border-left:2px solid #6a6a6a;"></div>
<div class="a" style="left:82px;top:127px;width:758px;height:460px;overflow:hidden"><div class="a" style="left:-82px;top:-127px;width:1920px;height:1080px">
<svg class="a" style="left:87px;top:133.5px;" width="8" height="5" viewBox="0 0 8 5"><path d="M0.8 0.8 L4 4.2 L7.2 0.8" fill="none" stroke="#404040" stroke-width="1.3"/></svg>
<svg class="a" style="left:104px;top:128px;" width="14" height="15" viewBox="0 0 14 15"><rect x="5" y="0" width="4" height="7" fill="#3a3a3a"/><rect x="6.2" y="1.2" width="1.6" height="1.6" fill="#5ee05e"/><rect x="0.5" y="7.5" width="13" height="7" fill="#e8e8e8" stroke="#888"/><rect x="2" y="10" width="2" height="2.5" fill="#333"/><rect x="10" y="10" width="2" height="2.5" fill="#333"/></svg>
<div class="t" style="left:124px;top:128.0px;letter-spacing:-1.0px;">DESKTOP-US4667J</div>
<svg class="a" style="left:109px;top:150px;" width="5" height="8" viewBox="0 0 5 8"><path d="M0.8 0.8 L4.2 4 L0.8 7.2" fill="none" stroke="#a0a0a0" stroke-width="1.3"/></svg>
<svg class="a" style="left:123px;top:146px;" width="15" height="15" viewBox="0 0 15 15"><circle cx="9" cy="5" r="4.6" fill="#e0e0e0" stroke="#999" stroke-width="0.8"/><circle cx="9" cy="5" r="1.5" fill="#fff" stroke="#aaa" stroke-width="0.6"/><path d="M1 10 Q1.5 8 3 8 H12 Q13.5 8 14 10Z" fill="#ccc"/><rect x="0.5" y="10" width="14" height="4" fill="#3c3c3c"/><rect x="11" y="11.2" width="2" height="1.5" fill="#4c4"/></svg>
<div class="t" style="left:143px;top:146.0px;">DVD-дисководы и дисководы компакт-дисков</div>
<svg class="a" style="left:109px;top:168px;" width="5" height="8" viewBox="0 0 5 8"><path d="M0.8 0.8 L4.2 4 L0.8 7.2" fill="none" stroke="#a0a0a0" stroke-width="1.3"/></svg>
<svg class="a" style="left:123px;top:164px;" width="15" height="16" viewBox="0 0 15 16"><path d="M7 1 L1.5 8 L7 15 M7 1 L12 6 M7 15 L12 10" fill="none" stroke="#333" stroke-width="2"/><path d="M6 8 H14" stroke="#333" stroke-width="2"/></svg>
<div class="t" style="left:143px;top:164.0px;letter-spacing:-0.1px;">User-mode Block Device Mounters</div>
<svg class="a" style="left:109px;top:186px;" width="5" height="8" viewBox="0 0 5 8"><path d="M0.8 0.8 L4.2 4 L0.8 7.2" fill="none" stroke="#a0a0a0" stroke-width="1.3"/></svg>
<svg class="a" style="left:126px;top:182px;" width="10" height="16" viewBox="0 0 10 16"><defs><linearGradient id="spg" x1="0" x2="1"><stop offset="0" stop-color="#4a4a4a"/><stop offset="0.35" stop-color="#d8d8d8"/><stop offset="1" stop-color="#8a8a8a"/></linearGradient></defs><path d="M0.5 5 H3.5 L9 0.5 V15.5 L3.5 11 H0.5Z" fill="url(#spg)" stroke="#7a7a7a" stroke-width="0.6"/><rect x="0.5" y="5" width="3" height="6" fill="#3a3a3a"/></svg>
<div class="t" style="left:143px;top:182.0px;">Аудиовходы и аудиовыходы</div>
<svg class="a" style="left:109px;top:204px;" width="5" height="8" viewBox="0 0 5 8"><path d="M0.8 0.8 L4.2 4 L0.8 7.2" fill="none" stroke="#a0a0a0" stroke-width="1.3"/></svg>
<svg class="a" style="left:122px;top:200px;" width="16" height="16" viewBox="0 0 16 16"><rect x="0.5" y="0.5" width="15" height="10" fill="#5cc0f0" stroke="#2a80c0" stroke-width="0.8"/><rect x="6" y="7" width="10" height="6" fill="#2a8a4a"/><rect x="7" y="13" width="7" height="2" fill="#f0b020"/></svg>
<div class="t" style="left:143px;top:200.0px;">Видеоадаптеры</div>
<svg class="a" style="left:109px;top:222px;" width="5" height="8" viewBox="0 0 5 8"><path d="M0.8 0.8 L4.2 4 L0.8 7.2" fill="none" stroke="#a0a0a0" stroke-width="1.3"/></svg>
<svg class="a" style="left:123px;top:218px;" width="14" height="16" viewBox="0 0 14 16"><rect x="2" y="0.5" width="10" height="15" rx="0.5" fill="#2e2e2e" stroke="#111" stroke-width="0.8"/><path d="M0.5 2.5 H2 M0.5 4.5 H2 M0.5 6.5 H2 M0.5 8.5 H2 M0.5 10.5 H2 M0.5 12.5 H2 M12 2.5 H13.5 M12 4.5 H13.5 M12 6.5 H13.5 M12 8.5 H13.5 M12 10.5 H13.5 M12 12.5 H13.5" stroke="#222" stroke-width="1"/><path d="M0.5 2.5 H1.5 M0.5 4.5 H1.5 M0.5 6.5 H1.5 M0.5 8.5 H1.5 M0.5 10.5 H1.5 M0.5 12.5 H1.5 M12.5 2.5 H13.5 M12.5 4.5 H13.5 M12.5 6.5 H13.5 M12.5 8.5 H13.5 M12.5 10.5 H13.5 M12.5 12.5 H13.5" stroke="#fff" stroke-width="0.5"/><path d="M5.5 0.5 Q7 2.5 8.5 0.5" fill="#fff"/><rect x="3.5" y="3" width="7" height="11" fill="#3a3a3a"/></svg>
<div class="t" style="left:143px;top:218.0px;">Встроенное ПО</div>
<svg class="a" style="left:108px;top:241.5px;" width="8" height="5" viewBox="0 0 8 5"><path d="M0.8 0.8 L4 4.2 L7.2 0.8" fill="none" stroke="#404040" stroke-width="1.3"/></svg>
<svg class="a" style="left:123px;top:242px;" width="14" height="8" viewBox="0 0 14 8"><path d="M1.5 2.5 Q2 0.5 4 0.5 H10 Q12 0.5 12.5 2.5 L13.5 4 H0.5Z" fill="#d8d8d8" stroke="#9a9a9a" stroke-width="0.8"/><rect x="0.5" y="4" width="13" height="3.5" fill="#3c3c3c"/><rect x="10" y="5" width="2" height="1.5" fill="#46d046"/></svg>
<div class="t" style="left:143px;top:236.0px;">Дисковые устройства</div>
<svg class="a" style="left:142px;top:261px;" width="14" height="8" viewBox="0 0 14 8"><path d="M1.5 2.5 Q2 0.5 4 0.5 H10 Q12 0.5 12.5 2.5 L13.5 4 H0.5Z" fill="#d8d8d8" stroke="#9a9a9a" stroke-width="0.8"/><rect x="0.5" y="4" width="13" height="3.5" fill="#3c3c3c"/><rect x="10" y="5" width="2" height="1.5" fill="#46d046"/></svg>
<div class="t" style="left:162px;top:254.0px;letter-spacing:-0.6px;">Generic USB CF Reader USB Device</div>
<svg class="a" style="left:142px;top:279px;" width="14" height="8" viewBox="0 0 14 8"><path d="M1.5 2.5 Q2 0.5 4 0.5 H10 Q12 0.5 12.5 2.5 L13.5 4 H0.5Z" fill="#d8d8d8" stroke="#9a9a9a" stroke-width="0.8"/><rect x="0.5" y="4" width="13" height="3.5" fill="#3c3c3c"/><rect x="10" y="5" width="2" height="1.5" fill="#46d046"/></svg>
<div class="t" style="left:162px;top:272.0px;letter-spacing:-0.6px;">Generic USB MS Reader USB Device</div>
<svg class="a" style="left:142px;top:297px;" width="14" height="8" viewBox="0 0 14 8"><path d="M1.5 2.5 Q2 0.5 4 0.5 H10 Q12 0.5 12.5 2.5 L13.5 4 H0.5Z" fill="#d8d8d8" stroke="#9a9a9a" stroke-width="0.8"/><rect x="0.5" y="4" width="13" height="3.5" fill="#3c3c3c"/><rect x="10" y="5" width="2" height="1.5" fill="#46d046"/></svg>
<div class="t" style="left:162px;top:290.0px;letter-spacing:-0.6px;">Generic USB SD Reader USB Device</div>
<svg class="a" style="left:142px;top:315px;" width="14" height="8" viewBox="0 0 14 8"><path d="M1.5 2.5 Q2 0.5 4 0.5 H10 Q12 0.5 12.5 2.5 L13.5 4 H0.5Z" fill="#d8d8d8" stroke="#9a9a9a" stroke-width="0.8"/><rect x="0.5" y="4" width="13" height="3.5" fill="#3c3c3c"/><rect x="10" y="5" width="2" height="1.5" fill="#46d046"/></svg>
<div class="t" style="left:162px;top:308.0px;letter-spacing:-0.6px;">Generic USB SM Reader USB Device</div>
<svg class="a" style="left:142px;top:333px;" width="14" height="8" viewBox="0 0 14 8"><path d="M1.5 2.5 Q2 0.5 4 0.5 H10 Q12 0.5 12.5 2.5 L13.5 4 H0.5Z" fill="#d8d8d8" stroke="#9a9a9a" stroke-width="0.8"/><rect x="0.5" y="4" width="13" height="3.5" fill="#3c3c3c"/><rect x="10" y="5" width="2" height="1.5" fill="#46d046"/></svg>
<div class="t" style="left:162px;top:326.0px;letter-spacing:-0.95px;">KINGSTON SNVS500G</div>
<svg class="a" style="left:142px;top:351px;" width="14" height="8" viewBox="0 0 14 8"><path d="M1.5 2.5 Q2 0.5 4 0.5 H10 Q12 0.5 12.5 2.5 L13.5 4 H0.5Z" fill="#d8d8d8" stroke="#9a9a9a" stroke-width="0.8"/><rect x="0.5" y="4" width="13" height="3.5" fill="#3c3c3c"/><rect x="10" y="5" width="2" height="1.5" fill="#46d046"/></svg>
<div class="t" style="left:162px;top:344.0px;letter-spacing:-0.33px;">Netac OnlyDisk USB Device</div>
<svg class="a" style="left:109px;top:366px;" width="5" height="8" viewBox="0 0 5 8"><path d="M0.8 0.8 L4.2 4 L0.8 7.2" fill="none" stroke="#a0a0a0" stroke-width="1.3"/></svg>
<svg class="a" style="left:126px;top:362px;" width="10" height="16" viewBox="0 0 10 16"><defs><linearGradient id="spg" x1="0" x2="1"><stop offset="0" stop-color="#4a4a4a"/><stop offset="0.35" stop-color="#d8d8d8"/><stop offset="1" stop-color="#8a8a8a"/></linearGradient></defs><path d="M0.5 5 H3.5 L9 0.5 V15.5 L3.5 11 H0.5Z" fill="url(#spg)" stroke="#7a7a7a" stroke-width="0.6"/><rect x="0.5" y="5" width="3" height="6" fill="#3a3a3a"/></svg>
<div class="t" style="left:143px;top:362.0px;">Звуковые, игровые и видеоустройства</div>
<svg class="a" style="left:109px;top:384px;" width="5" height="8" viewBox="0 0 5 8"><path d="M0.8 0.8 L4.2 4 L0.8 7.2" fill="none" stroke="#a0a0a0" stroke-width="1.3"/></svg>
<svg class="a" style="left:122px;top:382px;" width="16" height="12" viewBox="0 0 16 12"><rect x="0.5" y="0.5" width="15" height="10" fill="#eee" stroke="#666" stroke-width="0.8"/><path d="M2 3 H14 M2 5.5 H14 M2 8 H14" stroke="#999" stroke-dasharray="1 1"/><rect x="0" y="10" width="16" height="1.5" fill="#444"/></svg>
<div class="t" style="left:143px;top:380.0px;">Клавиатуры</div>
<svg class="a" style="left:109px;top:402px;" width="5" height="8" viewBox="0 0 5 8"><path d="M0.8 0.8 L4.2 4 L0.8 7.2" fill="none" stroke="#a0a0a0" stroke-width="1.3"/></svg>
<svg class="a" style="left:124px;top:398px;" width="14" height="16" viewBox="0 0 14 16"><rect x="1" y="2" width="6" height="13" fill="#2a2a2a"/><rect x="2.5" y="4" width="2" height="2" fill="#5d5"/><path d="M8 1 H14 V7 H8Z" fill="#3a8ad8"/><path d="M11 0 V8 M7 4 H15" stroke="#fff" stroke-width="1"/></svg>
<div class="t" style="left:143px;top:398.0px;">Компоненты программного обеспечения</div>
<svg class="a" style="left:109px;top:420px;" width="5" height="8" viewBox="0 0 5 8"><path d="M0.8 0.8 L4.2 4 L0.8 7.2" fill="none" stroke="#a0a0a0" stroke-width="1.3"/></svg>
<svg class="a" style="left:122px;top:416px;" width="16" height="16" viewBox="0 0 16 16"><rect x="0.5" y="0.5" width="15" height="11" fill="#5cc0f0" stroke="#2a80c0" stroke-width="0.8"/><rect x="5" y="12" width="6" height="1.5" fill="#888"/><rect x="2" y="14" width="12" height="1.5" fill="#aaa"/></svg>
<div class="t" style="left:143px;top:416.0px;">Компьютер</div>
<svg class="a" style="left:109px;top:438px;" width="5" height="8" viewBox="0 0 5 8"><path d="M0.8 0.8 L4.2 4 L0.8 7.2" fill="none" stroke="#a0a0a0" stroke-width="1.3"/></svg>
<svg class="a" style="left:122px;top:434px;" width="16" height="16" viewBox="0 0 16 16"><rect x="0.5" y="1" width="12" height="7" fill="#eee" stroke="#777" stroke-width="0.8"/><rect x="0.5" y="5" width="12" height="3" fill="#444"/><rect x="5" y="7" width="10" height="7" fill="#2a8a4a"/><rect x="6" y="14" width="8" height="2" fill="#f0b020"/></svg>
<div class="t" style="left:143px;top:434.0px;">Контроллеры IDE ATA/ATAPI</div>
<svg class="a" style="left:109px;top:456px;" width="5" height="8" viewBox="0 0 5 8"><path d="M0.8 0.8 L4.2 4 L0.8 7.2" fill="none" stroke="#a0a0a0" stroke-width="1.3"/></svg>
<svg class="a" style="left:126px;top:452px;" width="9" height="16" viewBox="0 0 9 16"><rect x="2.5" y="0.5" width="4" height="5" fill="#fff" stroke="#444" stroke-width="0.8"/><path d="M1 5 H8 V11 Q8 13 5.5 13 V15.5 H3.5 V13 Q1 13 1 11Z" fill="#3a3a3a"/></svg>
<div class="t" style="left:143px;top:452.0px;">Контроллеры USB</div>
<svg class="a" style="left:109px;top:474px;" width="5" height="8" viewBox="0 0 5 8"><path d="M0.8 0.8 L4.2 4 L0.8 7.2" fill="none" stroke="#a0a0a0" stroke-width="1.3"/></svg>
<svg class="a" style="left:122px;top:470px;" width="16" height="16" viewBox="0 0 16 16"><rect x="1" y="1" width="8" height="11" fill="#ddd" stroke="#777" stroke-width="0.8"/><rect x="5" y="7" width="10" height="7" fill="#2a8a4a"/><path d="M0 14 H16" stroke="#555" stroke-width="1.5"/></svg>
<div class="t" style="left:143px;top:470.0px;">Контроллеры запоминающих устройств</div>
<svg class="a" style="left:109px;top:492px;" width="5" height="8" viewBox="0 0 5 8"><path d="M0.8 0.8 L4.2 4 L0.8 7.2" fill="none" stroke="#a0a0a0" stroke-width="1.3"/></svg>
<svg class="a" style="left:122px;top:488px;" width="16" height="16" viewBox="0 0 16 16"><rect x="0.5" y="0.5" width="15" height="11" fill="#5cc0f0" stroke="#2a80c0" stroke-width="0.8"/><rect x="3" y="12" width="10" height="2" fill="#aaa"/></svg>
<div class="t" style="left:143px;top:488.0px;">Мониторы</div>
<svg class="a" style="left:109px;top:510px;" width="5" height="8" viewBox="0 0 5 8"><path d="M0.8 0.8 L4.2 4 L0.8 7.2" fill="none" stroke="#a0a0a0" stroke-width="1.3"/></svg>
<svg class="a" style="left:125px;top:506px;" width="10" height="16" viewBox="0 0 10 16"><rect x="0.7" y="0.7" width="8.6" height="14.6" rx="4.3" fill="#d0d4da" stroke="#2a2a2a" stroke-width="1.4"/><rect x="3.5" y="3" width="3" height="9" rx="1.5" fill="#6a707a"/></svg>
<div class="t" style="left:143px;top:506.0px;">Мыши и иные указывающие устройства</div>
<svg class="a" style="left:109px;top:528px;" width="5" height="8" viewBox="0 0 5 8"><path d="M0.8 0.8 L4.2 4 L0.8 7.2" fill="none" stroke="#a0a0a0" stroke-width="1.3"/></svg>
<svg class="a" style="left:122px;top:524px;" width="16" height="14" viewBox="0 0 16 14"><rect x="3" y="0.5" width="10" height="4" fill="#fff" stroke="#555" stroke-width="0.8"/><rect x="0.5" y="4" width="15" height="6" fill="#555"/><rect x="3" y="8" width="10" height="5" fill="#fff" stroke="#777" stroke-width="0.8"/></svg>
<div class="t" style="left:143px;top:524.0px;">Очереди печати</div>
<svg class="a" style="left:109px;top:546px;" width="5" height="8" viewBox="0 0 5 8"><path d="M0.8 0.8 L4.2 4 L0.8 7.2" fill="none" stroke="#a0a0a0" stroke-width="1.3"/></svg>
<svg class="a" style="left:124px;top:542px;" width="12" height="16" viewBox="0 0 12 16"><rect x="0.5" y="0.5" width="11" height="15" rx="1" fill="#3fa8f0" stroke="#1a5a9a" stroke-width="0.8"/><rect x="0" y="12" width="12" height="4" fill="#2a2a2a"/></svg>
<div class="t" style="left:143px;top:542.0px;">Переносные устройства</div>
<svg class="a" style="left:109px;top:564px;" width="5" height="8" viewBox="0 0 5 8"><path d="M0.8 0.8 L4.2 4 L0.8 7.2" fill="none" stroke="#a0a0a0" stroke-width="1.3"/></svg>
<svg class="a" style="left:123px;top:560px;" width="14" height="16" viewBox="0 0 14 16"><rect x="2" y="0.5" width="10" height="15" rx="0.5" fill="#2e2e2e" stroke="#111" stroke-width="0.8"/><path d="M0.5 2.5 H2 M0.5 4.5 H2 M0.5 6.5 H2 M0.5 8.5 H2 M0.5 10.5 H2 M0.5 12.5 H2 M12 2.5 H13.5 M12 4.5 H13.5 M12 6.5 H13.5 M12 8.5 H13.5 M12 10.5 H13.5 M12 12.5 H13.5" stroke="#222" stroke-width="1"/><path d="M0.5 2.5 H1.5 M0.5 4.5 H1.5 M0.5 6.5 H1.5 M0.5 8.5 H1.5 M0.5 10.5 H1.5 M0.5 12.5 H1.5 M12.5 2.5 H13.5 M12.5 4.5 H13.5 M12.5 6.5 H13.5 M12.5 8.5 H13.5 M12.5 10.5 H13.5 M12.5 12.5 H13.5" stroke="#fff" stroke-width="0.5"/><path d="M5.5 0.5 Q7 2.5 8.5 0.5" fill="#fff"/><rect x="3.5" y="3" width="7" height="11" fill="#3a3a3a"/></svg>
<div class="t" style="left:143px;top:560.0px;">Процессоры</div>
<svg class="a" style="left:109px;top:582px;" width="5" height="8" viewBox="0 0 5 8"><path d="M0.8 0.8 L4.2 4 L0.8 7.2" fill="none" stroke="#a0a0a0" stroke-width="1.3"/></svg>
<svg class="a" style="left:124px;top:578px;" width="14" height="16" viewBox="0 0 14 16"><rect x="1" y="2" width="6" height="13" fill="#2a2a2a"/><rect x="2.5" y="4" width="2" height="2" fill="#5d5"/><path d="M8 1 H14 V7 H8Z" fill="#3a8ad8"/><path d="M11 0 V8 M7 4 H15" stroke="#fff" stroke-width="1"/></svg>
<div class="t" style="left:143px;top:578.0px;">Программные устройства</div>
<svg class="a" style="left:109px;top:600px;" width="5" height="8" viewBox="0 0 5 8"><path d="M0.8 0.8 L4.2 4 L0.8 7.2" fill="none" stroke="#a0a0a0" stroke-width="1.3"/></svg>
<svg class="a" style="left:122px;top:596px;" width="16" height="16" viewBox="0 0 16 16"><rect x="0.5" y="0.5" width="15" height="11" fill="#5cc0f0" stroke="#2a80c0" stroke-width="0.8"/><rect x="5" y="12" width="6" height="1.5" fill="#888"/><rect x="2" y="14" width="12" height="1.5" fill="#aaa"/></svg>
<div class="t" style="left:143px;top:596.0px;">Сетевые адаптеры</div>
<svg class="a" style="left:109px;top:618px;" width="5" height="8" viewBox="0 0 5 8"><path d="M0.8 0.8 L4.2 4 L0.8 7.2" fill="none" stroke="#a0a0a0" stroke-width="1.3"/></svg>
<svg class="a" style="left:122px;top:614px;" width="16" height="16" viewBox="0 0 16 16"><rect x="0.5" y="0.5" width="15" height="11" fill="#5cc0f0" stroke="#2a80c0" stroke-width="0.8"/><rect x="5" y="12" width="6" height="1.5" fill="#888"/><rect x="2" y="14" width="12" height="1.5" fill="#aaa"/></svg>
<div class="t" style="left:143px;top:614.0px;">Системные устройства</div>
<svg class="a" style="left:109px;top:636px;" width="5" height="8" viewBox="0 0 5 8"><path d="M0.8 0.8 L4.2 4 L0.8 7.2" fill="none" stroke="#a0a0a0" stroke-width="1.3"/></svg>
<svg class="a" style="left:122px;top:634px;" width="16" height="12" viewBox="0 0 16 12"><rect x="0.5" y="0.5" width="15" height="10" fill="#eee" stroke="#666" stroke-width="0.8"/><path d="M2 3 H14 M2 5.5 H14 M2 8 H14" stroke="#999" stroke-dasharray="1 1"/><rect x="0" y="10" width="16" height="1.5" fill="#444"/></svg>
<div class="t" style="left:143px;top:632.0px;">Устройства HID (Human Interface Devices)</div>
</div></div>
<div class="a" style="left:840px;top:127px;width:17px;height:460px;background:#f0f0f0;"></div>
<svg class="a" style="left:844px;top:133px;" width="8" height="5" viewBox="0 0 8 5"><path d="M0.8 4.2 L4 1 L7.2 4.2" fill="none" stroke="#606060" stroke-width="1.5"/></svg>
<div class="a" style="left:842px;top:144px;width:13px;height:305px;background:#cdcdcd;"></div>
<div class="a" style="left:80px;top:587px;width:778px;height:25px;background:#f0f0f0;border-top:1px solid #d8d8d8;"></div>
</div></div>
<div class="a" style="left:1572px;top:302px;width:16px;height:562px;background:#f0f0f0;"></div>
<svg class="a" style="left:1576px;top:310px;" width="8" height="5" viewBox="0 0 8 5"><path d="M0.8 4.2 L4 1 L7.2 4.2" fill="none" stroke="#606060" stroke-width="1.5"/></svg>
<div class="a" style="left:1573px;top:320px;width:14px;height:270px;background:#cdcdcd;"></div>
<svg class="a" style="left:1576px;top:853px;" width="8" height="5" viewBox="0 0 8 5"><path d="M0.8 0.8 L4 4 L7.2 0.8" fill="none" stroke="#606060" stroke-width="1.5"/></svg>
<div class="a" style="left:164px;top:864px;width:1408px;height:16px;background:#f0f0f0;"></div>
<svg class="a" style="left:169px;top:868px;" width="5" height="8" viewBox="0 0 5 8"><path d="M4.2 0.8 L1 4 L4.2 7.2" fill="none" stroke="#606060" stroke-width="1.5"/></svg>
<div class="a" style="left:181px;top:865px;width:1000px;height:14px;background:#cdcdcd;"></div>
<div class="a" style="left:1572px;top:864px;width:16px;height:16px;background:#f0f0f0;"></div>
<div class="a" style="left:164px;top:880px;width:1424px;height:27px;background:#f0f0f0;border-top:1px solid #e0e0e0;"></div>
<div class="a" style="left:319px;top:883px;width:1px;height:22px;background:#d8d8d8;"></div>
<div class="a" style="left:475px;top:883px;width:1px;height:22px;background:#d8d8d8;"></div>
<div class="a" style="left:631px;top:883px;width:1px;height:22px;background:#d8d8d8;"></div>
<div class="a" style="left:787px;top:883px;width:1px;height:22px;background:#d8d8d8;"></div>
<div class="a" style="left:1371px;top:883px;width:1px;height:22px;background:#d8d8d8;"></div>
<svg class="a" style="left:168px;top:888px;" width="12" height="12" viewBox="0 0 12 12"><path d="M6 0 V12 M0 6 H12 M6 0 L4 2 M6 0 L8 2 M6 12 L4 10 M6 12 L8 10 M0 6 L2 4 M0 6 L2 8 M12 6 L10 4 M12 6 L10 8" stroke="#1f3864" stroke-width="1.2" fill="none"/></svg>
<div class="t" style="left:186px;top:887.0px;color:#1c1c1c;letter-spacing:-0.3px;">934, 324пкс</div>
<svg class="a" style="left:325px;top:887px;" width="14" height="14" viewBox="0 0 14 14"><rect x="3.5" y="2.5" width="9" height="9" fill="none" stroke="#1f3864" stroke-dasharray="1.5 1"/><path d="M1 1 V12 H13" fill="none" stroke="#1f3864" stroke-width="1"/></svg>
<svg class="a" style="left:481px;top:887px;" width="14" height="14" viewBox="0 0 14 14"><rect x="3.5" y="2.5" width="9" height="9" fill="none" stroke="#1f3864" stroke-width="1.1"/><path d="M1 1 V12 H13" fill="none" stroke="#1f3864" stroke-width="1"/></svg>
<div class="t" style="left:500px;top:887.0px;color:#1c1c1c;letter-spacing:-0.4px;">1920 × 1080пкс</div>
<svg class="a" style="left:638px;top:888px;" width="12" height="12" viewBox="0 0 12 12"><rect x="0.6" y="0.6" width="10.8" height="10.8" fill="none" stroke="#1f3864" stroke-width="1.2"/><rect x="3" y="1" width="6" height="3.5" fill="none" stroke="#1f3864"/><rect x="3" y="7" width="6" height="4" fill="none" stroke="#1f3864"/></svg>
<div class="t" style="left:656px;top:887.0px;color:#1c1c1c;letter-spacing:-0.3px;">Размер: 286,7КБ</div>
<div class="t" style="left:1392px;top:887.0px;color:#1c1c1c;letter-spacing:-0.3px;">100%</div>
<svg class="a" style="left:1427px;top:886px;" width="17" height="17" viewBox="0 0 17 17"><circle cx="8.5" cy="8.5" r="7.8" fill="#fff" stroke="#777" stroke-width="1"/><rect x="4.5" y="7.8" width="8" height="1.5" fill="#555"/></svg>
<div class="a" style="left:1453px;top:893px;width:90px;height:3px;background:#e2e6ea;border:1px solid #d0d4d8;"></div>
<svg class="a" style="left:1492px;top:886px;" width="9" height="17" viewBox="0 0 9 17"><path d="M0 0 H9 V13 L4.5 17 L0 13Z" fill="#0078d7"/></svg>
<div class="a" style="left:1540px;top:856px;width:364px;height:171px;background:#383838;"></div>
<svg class="a" style="left:1556px;top:875px;" width="17" height="16" viewBox="0 0 17 16"><path d="M1 8 H15 M15 8 L12 5.5 V10.5Z M4 8 L8 3 H11 M6 8 L9 12.5 H11" stroke="#fff" stroke-width="1.1" fill="#fff"/><circle cx="12" cy="3" r="1.6" fill="#fff"/><rect x="10.5" y="11.2" width="2.6" height="2.6" fill="#fff"/><circle cx="2" cy="8" r="1.8" fill="#fff"/></svg>
<div class="t" style="left:1581px;top:875.0px;font-size:13px;color:#f0f0f0;letter-spacing:-0.3px;">Проводник</div>
<svg class="a" style="left:1871px;top:877px;" width="11" height="11" viewBox="0 0 11 11"><path d="M0.5 0.5 L10.5 10.5 M10.5 0.5 L0.5 10.5" stroke="#c8c8c8" stroke-width="1.1"/></svg>
<svg class="a" style="left:1561px;top:915px;" width="50" height="51" viewBox="0 0 50 51"><path d="M25 0.5 L49.5 49.5 H0.5Z" fill="#f8d800"/><rect x="23.2" y="17" width="3.6" height="21" fill="#000"/><rect x="23.2" y="41" width="3.6" height="4" fill="#000"/></svg>
<div class="t" style="left:1632px;top:907.0px;font-size:15px;line-height:20px;color:#fff;letter-spacing:-0.45px;font-weight:bold;">USB-устройство не опознано</div>
<div class="t" style="left:1632px;top:927.0px;font-size:15px;line-height:20px;color:#a8a8a8;letter-spacing:0.1px;">Последнее USB-устройство,</div>
<div class="t" style="left:1632px;top:947.0px;font-size:15px;line-height:20px;color:#a8a8a8;letter-spacing:0.1px;">подключенное к этому компьютеру,</div>
<div class="t" style="left:1632px;top:967.0px;font-size:15px;line-height:20px;color:#a8a8a8;letter-spacing:0.1px;">работает неправильно, и Windows</div>
<div class="t" style="left:1632px;top:987.0px;font-size:15px;line-height:20px;color:#a8a8a8;letter-spacing:0.1px;">не удается опознать его.</div>
<div class="a" style="left:0px;top:1040px;width:1920px;height:40px;background:#433a38;"></div>
<div class="a" style="left:442px;top:1040px;width:48px;height:40px;background:#b06a32;"></div>
<div class="a" style="left:834px;top:1040px;width:48px;height:40px;background:#5e5654;"></div>
<div class="a" style="left:250px;top:1077px;width:40px;height:3px;background:#76b9ed;"></div>
<div class="a" style="left:299px;top:1077px;width:40px;height:3px;background:#76b9ed;"></div>
<div class="a" style="left:348px;top:1077px;width:40px;height:3px;background:#76b9ed;"></div>
<div class="a" style="left:397px;top:1077px;width:40px;height:3px;background:#76b9ed;"></div>
<div class="a" style="left:495px;top:1077px;width:40px;height:3px;background:#76b9ed;"></div>
<div class="a" style="left:544px;top:1077px;width:40px;height:3px;background:#76b9ed;"></div>
<div class="a" style="left:593px;top:1077px;width:40px;height:3px;background:#76b9ed;"></div>
<div class="a" style="left:642px;top:1077px;width:40px;height:3px;background:#76b9ed;"></div>
<div class="a" style="left:691px;top:1077px;width:40px;height:3px;background:#76b9ed;"></div>
<div class="a" style="left:740px;top:1077px;width:40px;height:3px;background:#76b9ed;"></div>
<div class="a" style="left:789px;top:1077px;width:40px;height:3px;background:#76b9ed;"></div>
<div class="a" style="left:442px;top:1077px;width:48px;height:3px;background:#ff7a00;"></div>
<div class="a" style="left:834px;top:1077px;width:48px;height:3px;background:#76b9ed;"></div>
<svg class="a" style="left:16px;top:1052px;" width="17" height="17" viewBox="0 0 17 17"><path d="M0 2.3 L7 1.3 V8 H0Z M8 1.1 L17 0 V8 H8Z M0 9 H7 V15.7 L0 14.7Z M8 9 H17 V17 L8 15.9Z" fill="#fff"/></svg>
<svg class="a" style="left:64px;top:1052px;" width="17" height="17" viewBox="0 0 17 17"><circle cx="8.5" cy="8.5" r="7.2" fill="none" stroke="#fff" stroke-width="2"/></svg>
<svg class="a" style="left:112px;top:1049px;" width="22" height="22" viewBox="0 0 22 22"><rect x="0" y="0" width="22" height="22" rx="2" fill="#001e36"/><text x="11" y="15.5" font-size="11" font-weight="bold" fill="#31a8ff" text-anchor="middle" font-family="Liberation Sans">Ps</text></svg>
<svg class="a" style="left:160px;top:1048px;" width="24" height="24" viewBox="0 0 24 24"><path d="M12 1.5 A10.5 10.5 0 1 1 5.5 20.3 L1.5 22.5 L3 17.5 A10.5 10.5 0 0 1 12 1.5Z" fill="none" stroke="#2fd15a" stroke-width="2.2"/><path d="M8 7 Q7 10 10 13.5 Q13.5 17 16.5 16 L17 14 L14.5 12.8 L13 14 Q10.5 12.5 9.5 10.5 L10.5 9 L9.5 6.5Z" fill="#2fd15a"/></svg>
<svg class="a" style="left:208px;top:1048px;" width="24" height="24" viewBox="0 0 24 24"><circle cx="12" cy="12" r="12" fill="#fc3f1d"/><text x="12" y="18" font-size="16" font-weight="bold" fill="#fff" text-anchor="middle" font-family="Liberation Sans">Я</text></svg>
<svg class="a" style="left:258px;top:1050px;" width="23" height="20" viewBox="0 0 23 20"><path d="M0 2 H8 L10 4 H22 V18 H0Z" fill="#f5c542"/><rect x="0" y="6" width="23" height="13" fill="#fcd865"/><path d="M7 19 V12 H16 V19 H13 V15 H10 V19Z" fill="#1a7ad8"/></svg>
<svg class="a" style="left:306px;top:1048px;" width="24" height="24" viewBox="0 0 24 24"><circle cx="12" cy="12" r="12" fill="#fff"/><path d="M6.5 5 L12 12.5 L17.5 5 M12 12.5 V20" fill="none" stroke="#f33" stroke-width="2.6"/><path d="M13 11 L17.5 5" stroke="#c6f" stroke-width="2.6"/></svg>
<svg class="a" style="left:355px;top:1048px;" width="25" height="25" viewBox="0 0 25 25"><defs><linearGradient id="edg" x1="0" y1="0" x2="1" y2="1"><stop offset="0" stop-color="#35c1f1"/><stop offset="0.6" stop-color="#1a7ad8"/><stop offset="1" stop-color="#0c59a4"/></linearGradient></defs><circle cx="12.5" cy="12.5" r="12" fill="url(#edg)"/><path d="M5 14 Q6 6 13 6 Q20 6 20 12 H9 Q10 18 17 18 Q21 18 23 16 Q20 24 12 24 Q4 23 5 14Z" fill="#2ed47a" opacity="0.9"/><ellipse cx="14" cy="12" rx="5" ry="2.5" fill="#fff" opacity="0.0"/></svg>
<svg class="a" style="left:404px;top:1047px;" width="23" height="25" viewBox="0 0 23 25"><rect x="8" y="0" width="15" height="25" rx="1" fill="#21a366"/><rect x="8" y="8" width="15" height="9" fill="#107c41"/><rect x="0" y="9" width="13" height="13" rx="1.5" fill="#185c37"/><text x="6.5" y="19.5" font-size="10" font-weight="bold" fill="#fff" text-anchor="middle" font-family="Liberation Sans">X</text></svg>
<svg class="a" style="left:453px;top:1048px;" width="25" height="25" viewBox="0 0 25 25"><circle cx="12" cy="12" r="11.5" fill="#29a9eb"/><path d="M5 12 L18 6.5 L16 18 L12 15 L10 17.5 L10 14 L16 8.5 L9 13Z" fill="#fff"/></svg>
<div class="a" style="left:464px;top:1063px;width:16px;height:11px;background:#ee3030;border-radius:2px;"></div>
<div class="t" style="left:465px;top:1063.0px;font-size:9px;line-height:11px;color:#fff;letter-spacing:-0.5px;">.63</div>
<svg class="a" style="left:504px;top:1052px;" width="22" height="17" viewBox="0 0 22 17"><rect x="0.5" y="0.5" width="21" height="16" fill="#7cc3f0" stroke="#1c6fb8"/><circle cx="7" cy="7" r="3.8" fill="#f5b73b"/><path d="M7 7 V3.2 A3.8 3.8 0 0 1 10.8 7Z" fill="#2f7fd0"/><rect x="13" y="4" width="6" height="2" fill="#fff"/><rect x="13" y="8" width="6" height="2" fill="#fff"/><rect x="3" y="13" width="8" height="1.5" fill="#f09a1a"/></svg>
<svg class="a" style="left:553px;top:1049px;" width="22" height="22" viewBox="0 0 22 22"><defs><linearGradient id="phg" x1="0" y1="0" x2="1" y2="1"><stop offset="0" stop-color="#3ab0f5"/><stop offset="1" stop-color="#5a3ad8"/></linearGradient></defs><rect x="0" y="0" width="22" height="22" rx="3" fill="url(#phg)"/><path d="M0 17 L8 8 L14 14 L17 11 L22 16 V22 H0Z" fill="#8ad8ff" opacity="0.8"/><circle cx="16" cy="5" r="2.2" fill="#fff"/></svg>
<svg class="a" style="left:601px;top:1049px;" width="22" height="22" viewBox="0 0 22 22"><rect x="2" y="8" width="18" height="10" rx="2" fill="#555"/><rect x="1" y="11" width="20" height="8" rx="2" fill="#2e2e2e"/><path d="M6 8 L8 2 H14 L16 8Z" fill="#eee"/><rect x="11" y="1.5" width="4" height="4" fill="#e33"/><rect x="8" y="13" width="5" height="2" fill="#ddd"/></svg>
<svg class="a" style="left:650px;top:1051px;" width="22" height="19" viewBox="0 0 22 19"><path d="M2 18 Q3 8 13 7 V2 L21 9.5 L13 16 V11 Q6 11 2 18Z" fill="#f8e030" stroke="#c8a000" stroke-width="0.7"/></svg>
<svg class="a" style="left:698px;top:1048px;" width="24" height="24" viewBox="0 0 24 24"><rect x="2" y="2" width="9" height="8" fill="#cde" stroke="#777" stroke-width="0.7"/><rect x="13" y="0.5" width="10" height="8" fill="#7cf" stroke="#357" stroke-width="0.7"/><circle cx="12" cy="13" r="5.5" fill="#bfe6fa" stroke="#3a70c0" stroke-width="1.5"/><path d="M8 17 L3 22" stroke="#f0b020" stroke-width="2.4"/><path d="M16 18 H23" stroke="#888"/></svg>
<svg class="a" style="left:747px;top:1048px;" width="24" height="24" viewBox="0 0 24 24"><rect x="6" y="0.5" width="17" height="13" fill="#1a40c8" stroke="#889" stroke-width="0.8"/><rect x="0.5" y="11" width="20" height="11" fill="#a8b0b8" stroke="#667" stroke-width="0.8"/><rect x="3" y="14" width="12" height="2" fill="#556"/></svg>
<svg class="a" style="left:796px;top:1049px;" width="24" height="23" viewBox="0 0 24 23"><rect x="10" y="0.5" width="12" height="14" fill="#e8e8e8" stroke="#888" stroke-width="0.8"/><rect x="12" y="3" width="6" height="5" fill="#333"/><rect x="13.5" y="4.5" width="2" height="2" fill="#5d5"/><rect x="0.5" y="12" width="22" height="10" fill="#e0e0e0" stroke="#888" stroke-width="0.8"/><rect x="4" y="15" width="3" height="4" fill="#333"/><rect x="16" y="15" width="3" height="4" fill="#333"/></svg>
<svg class="a" style="left:845px;top:1048px;" width="25" height="24" viewBox="0 0 25 24"><path d="M12 2 Q22 2 23 11 Q24 16 18 16 Q15 16 15 19 Q15 23 11 23 Q2 22 1.5 12 Q1 2 12 2Z" fill="#d8e6f5" stroke="#7a9ac0" stroke-width="1"/><circle cx="6" cy="12" r="2.2" fill="#e33"/><circle cx="9" cy="6.5" r="2.2" fill="#3b3"/><circle cx="15" cy="6" r="2.2" fill="#39e"/><circle cx="9" cy="17.5" r="2.2" fill="#fc0"/><path d="M24 0 L17 18" stroke="#f08a20" stroke-width="3"/></svg>
<svg class="a" style="left:1675px;top:1055px;" width="13" height="8" viewBox="0 0 13 8"><path d="M0.8 7.2 L6.5 1 L12.2 7.2" fill="none" stroke="#fff" stroke-width="1.2"/></svg>
<svg class="a" style="left:1697px;top:1052px;" width="16" height="16" viewBox="0 0 16 16"><path d="M1 8 H15 M15 8 L12 5.5 V10.5Z M4 8 L8 3 H11 M6 8 L9 12.5 H11" stroke="#fff" stroke-width="1.1" fill="#fff"/><circle cx="12" cy="3" r="1.6" fill="#fff"/><rect x="10.5" y="11.2" width="2.6" height="2.6" fill="#fff"/><circle cx="2" cy="8" r="1.8" fill="#fff"/></svg>
<svg class="a" style="left:1720px;top:1052px;" width="18" height="16" viewBox="0 0 18 16"><path d="M1 5 H4 L9 1 V15 L4 11 H1Z" fill="none" stroke="#fff" stroke-width="1.1"/><path d="M11 5 Q12.5 8 11 11 M13 3 Q15.5 8 13 13 M15 1.5 Q18.5 8 15 14.5" fill="none" stroke="#fff" stroke-width="1.1"/></svg>
<svg class="a" style="left:1747px;top:1053px;" width="15" height="15" viewBox="0 0 15 15"><path d="M1 14 Q1 5 13 2 M4 14 Q4 8 13 5 M7 14 Q7 10 13 8" fill="none" stroke="#aaa" stroke-width="1.1"/><circle cx="11" cy="12.5" r="1.5" fill="#fff"/></svg>
<div class="t" style="left:1771px;top:1052.0px;color:#fff;letter-spacing:-0.3px;">ENG</div>
<div class="t" style="left:1784px;top:1042px;width:100px;text-align:center;color:#fff">13:32</div>
<div class="t" style="left:1784px;top:1060px;width:100px;text-align:center;color:#fff;letter-spacing:-0.4px">27.01.2026</div>
<svg class="a" style="left:1879px;top:1052px;" width="18" height="16" viewBox="0 0 18 16"><path d="M0.5 0.5 H16.5 V11.5 H6 L2 15 V11.5 H0.5Z" fill="#fff"/><path d="M3 3.5 H14 M3 6 H14 M3 8.5 H10" stroke="#433a38" stroke-width="1"/></svg>
<svg class="a" style="left:1886px;top:1059px;" width="18" height="18" viewBox="0 0 18 18"><circle cx="9" cy="9" r="8.3" fill="#433a38" stroke="#fff" stroke-width="1"/><text x="9" y="13.3" font-size="12" font-weight="bold" fill="#fff" text-anchor="middle" font-family="Liberation Sans">2</text></svg>
<div class="a" style="left:1914px;top:1040px;width:1px;height:40px;background:#7a7270;"></div>
</body></html>
